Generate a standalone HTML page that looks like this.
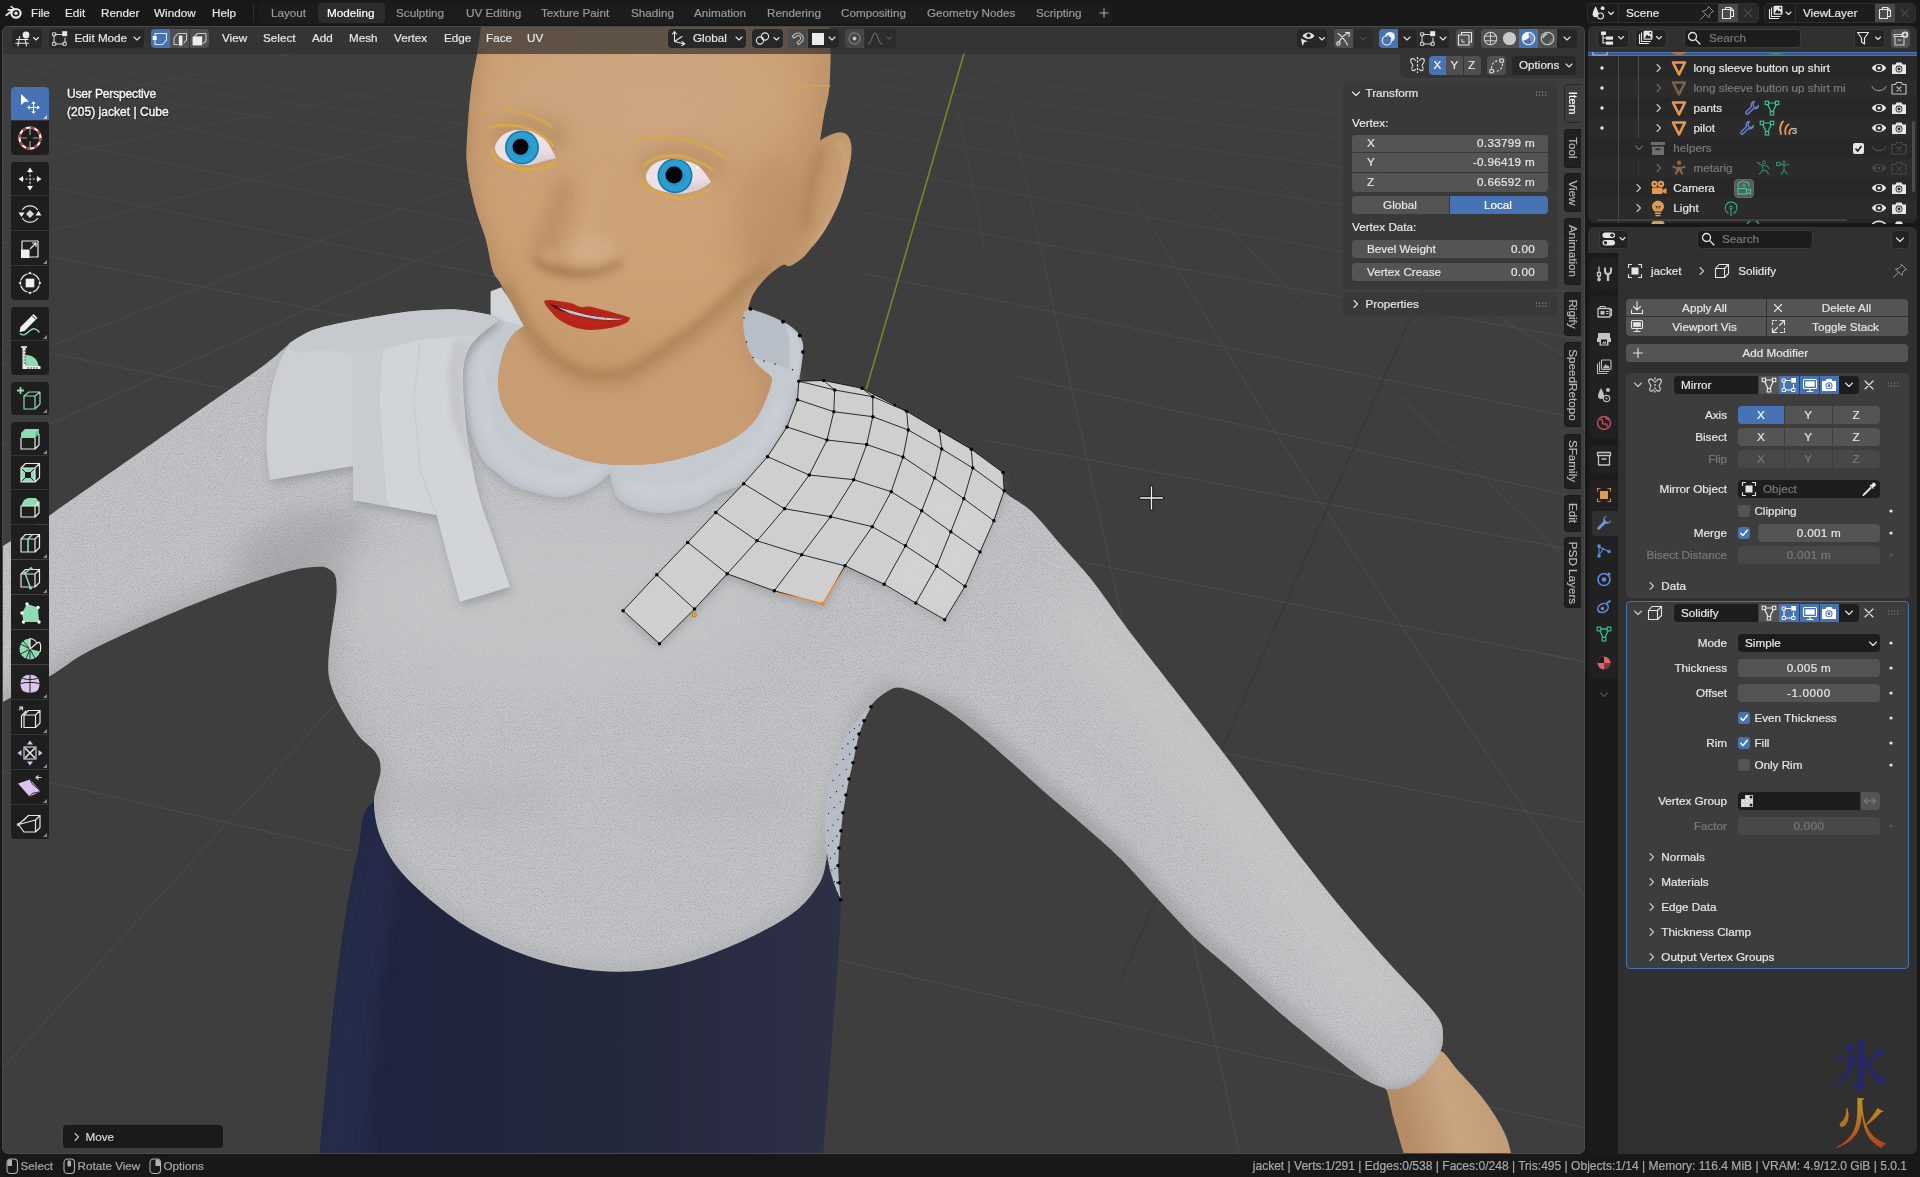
<!DOCTYPE html>
<html lang="en">
<head>
<meta charset="utf-8">
<title>Blender - jacket modeling</title>
<style>
*{box-sizing:border-box;margin:0;padding:0}
html,body{width:1920px;height:1177px;overflow:hidden;background:#181818}
body{position:relative;font-family:"Liberation Sans","Noto Sans CJK JP",sans-serif;font-size:11.7px;color:#e6e6e6;line-height:1}
.a{position:absolute}
.t{position:absolute;white-space:nowrap;line-height:14px;height:14px;margin-top:-7px;-webkit-text-stroke:.2px}
.tc{transform:translateX(-50%)}
.tr{transform:translateX(-100%)}
.n{letter-spacing:.3px}
.dim{color:#9a9a9a}
.dim2{color:#7a7a7a}
.btn{position:absolute;background:#545454;border-radius:3px}
.dk{position:absolute;background:#1d1d1d;border-radius:3px}
.bl{position:absolute;background:#4772b3;border-radius:3px}
svg{position:absolute;overflow:visible}
.ic{fill:none;stroke:#e6e6e6;stroke-width:1.1;stroke-linecap:round;stroke-linejoin:round}
</style>
</head>
<body>
<div id="root" style="position:absolute;left:0;top:0;width:1920px;height:1177px;will-change:transform">
<!-- ===== TOP BAR ===== -->
<div class="a" style="left:0;top:0;width:1920px;height:26px;background:#181818"></div>
<div class="a" style="left:258px;top:2px;width:854px;height:22px;background:#1c1c1c;border-radius:4px"></div>
<svg style="left:5px;top:4px" width="18" height="17" viewBox="0 0 18 17"><g fill="none" stroke="#e6e6e6" stroke-linecap="round" stroke-linejoin="round"><path d="M1.2 11.3 L8.4 5.8 M3.3 5.8 H8.6 M6.2 2.6 L9.4 5.1" stroke-width="1.7"/><ellipse cx="11" cy="9.3" rx="4.6" ry="4.3" stroke-width="2.2"/></g><circle cx="11" cy="9.3" r="1.7" fill="#e6e6e6"/></svg>
<span class="t" style="left:31px;top:12.6px">File</span>
<span class="t" style="left:65px;top:12.6px">Edit</span>
<span class="t" style="left:101px;top:12.6px">Render</span>
<span class="t" style="left:154px;top:12.6px">Window</span>
<span class="t" style="left:212px;top:12.6px">Help</span>
<div class="a" style="left:253px;top:4px;width:1px;height:18px;background:#2e2e2e"></div>
<span class="t dim" style="left:271px;top:12.6px">Layout</span>
<div class="a" style="left:318px;top:3px;width:67px;height:20px;background:#2c2c2c;border-radius:4px"></div>
<span class="t" style="left:327px;top:12.6px;color:#fff">Modeling</span>
<span class="t dim" style="left:396px;top:12.6px">Sculpting</span>
<span class="t dim" style="left:466px;top:12.6px">UV Editing</span>
<span class="t dim" style="left:541px;top:12.6px">Texture Paint</span>
<span class="t dim" style="left:631px;top:12.6px">Shading</span>
<span class="t dim" style="left:694px;top:12.6px">Animation</span>
<span class="t dim" style="left:767px;top:12.6px">Rendering</span>
<span class="t dim" style="left:841px;top:12.6px">Compositing</span>
<span class="t dim" style="left:927px;top:12.6px">Geometry Nodes</span>
<span class="t dim" style="left:1036px;top:12.6px">Scripting</span>
<svg style="left:1099px;top:8px" width="10" height="10"><path d="M5 0.5V9.5M0.5 5H9.5" stroke="#b0b0b0" stroke-width="1.1" fill="none"/></svg>

<!-- scene selector -->
<div class="a" style="left:1587px;top:3px;width:172px;height:20px;background:#1d1d1d;border-radius:4px;border:1px solid #2f2f2f"></div>
<div class="a" style="left:1618px;top:4px;width:1px;height:18px;background:#303030"></div>
<div class="a" style="left:1718px;top:4px;width:20px;height:18px;background:#4a4a4a"></div>
<div class="a" style="left:1738px;top:4px;width:20px;height:18px;background:#2a2a2a;border-radius:0 3px 3px 0"></div>
<svg style="left:1591px;top:5px" width="26" height="16" viewBox="0 0 26 16"><path d="M4.6 1.2 C6.5 4.5 7.6 7.6 7.6 9.6 C7.6 11.2 6.3 12.2 4.6 12.2 C2.9 12.2 1.6 11.2 1.6 9.6 C1.6 7.6 2.7 4.5 4.6 1.2Z" fill="#e6e6e6"/><circle cx="11.6" cy="3.2" r="1.9" fill="#e6e6e6"/><circle cx="9.5" cy="11" r="3" fill="#1d1d1d" stroke="#e6e6e6" stroke-width="1.1"/><path d="M17.5 7 L20 9.5 L22.5 7" class="ic"/></svg>
<span class="t" style="left:1626px;top:12.6px">Scene</span>
<svg style="left:1699px;top:5px" width="16" height="16" viewBox="0 0 16 16"><path d="M9.5 1.5 L14.5 6.5 L13 7 L10.5 9.5 L10 12.5 L3.5 6 L6.5 5.5 L9 3Z M6.7 9.3 L1.5 14.5" fill="none" stroke="#8a8a8a" stroke-width="1" stroke-linejoin="round" stroke-linecap="round"/></svg>
<svg style="left:1721px;top:6px" width="14" height="14" viewBox="0 0 14 14"><path d="M4.5 3.5V1.5H9.5L12.5 4.5V10.5H9.5 M9.5 1.5V4.5H12.5 M1.5 3.5H9.5V12.5H1.5Z" class="ic"/></svg>
<svg style="left:1743px;top:8px" width="10" height="10"><path d="M1 1L9 9M9 1L1 9" stroke="#4a4a4a" stroke-width="1.1" fill="none"/></svg>

<!-- view layer selector -->
<div class="a" style="left:1764px;top:3px;width:152px;height:20px;background:#1d1d1d;border-radius:4px;border:1px solid #2f2f2f"></div>
<div class="a" style="left:1795px;top:4px;width:1px;height:18px;background:#303030"></div>
<div class="a" style="left:1875px;top:4px;width:20px;height:18px;background:#4a4a4a"></div>
<div class="a" style="left:1895px;top:4px;width:20px;height:18px;background:#2a2a2a;border-radius:0 3px 3px 0"></div>
<svg style="left:1768px;top:5px" width="26" height="16" viewBox="0 0 26 16"><path d="M1.5 4.5V13.5H10.5 M3.5 2.8V11.5H12.3" class="ic"/><rect x="5.5" y="0.8" width="9" height="9" rx="1" fill="#e6e6e6"/><path d="M6.5 8.5 L9 4.5 L10.5 6.5 L11.5 5.5 L13.5 8.5Z" fill="#1d1d1d"/><circle cx="12.3" cy="3" r="0.9" fill="#1d1d1d"/><path d="M18 7 L20.5 9.5 L23 7" class="ic"/></svg>
<span class="t" style="left:1803px;top:12.6px">ViewLayer</span>
<svg style="left:1878px;top:6px" width="14" height="14" viewBox="0 0 14 14"><path d="M4.5 3.5V1.5H9.5L12.5 4.5V10.5H9.5 M9.5 1.5V4.5H12.5 M1.5 3.5H9.5V12.5H1.5Z" class="ic"/></svg>
<svg style="left:1900px;top:8px" width="10" height="10"><path d="M1 1L9 9M9 1L1 9" stroke="#4a4a4a" stroke-width="1.1" fill="none"/></svg>
<!-- ===== 3D VIEWPORT SCENE ===== -->
<div class="a" id="vp" style="left:2px;top:26px;width:1583px;height:1128px;border-radius:6px;overflow:hidden;background:#3e3e3e;border:1px solid #4a4a4a">
<svg style="left:-3px;top:-27px" width="1920" height="1177" viewBox="0 0 1920 1177">
<defs>
 <filter id="b1" filterUnits="userSpaceOnUse" x="-60" y="-60" width="2040" height="1300"><feGaussianBlur stdDeviation="1"/></filter>
 <filter id="b2" filterUnits="userSpaceOnUse" x="-60" y="-60" width="2040" height="1300"><feGaussianBlur stdDeviation="2"/></filter>
 <filter id="b4" filterUnits="userSpaceOnUse" x="-60" y="-60" width="2040" height="1300"><feGaussianBlur stdDeviation="4"/></filter>
 <filter id="b8" filterUnits="userSpaceOnUse" x="-60" y="-60" width="2040" height="1300"><feGaussianBlur stdDeviation="8"/></filter>
 <filter id="b14" filterUnits="userSpaceOnUse" x="-60" y="-60" width="2040" height="1300"><feGaussianBlur stdDeviation="14"/></filter>
 <filter id="b25" filterUnits="userSpaceOnUse" x="-60" y="-60" width="2040" height="1300"><feGaussianBlur stdDeviation="25"/></filter>
 <filter id="fNoise" filterUnits="userSpaceOnUse" x="0" y="280" width="1520" height="820"><feTurbulence type="fractalNoise" baseFrequency="0.85" numOctaves="2" seed="7" result="n"/><feColorMatrix in="n" type="matrix" values="3.2 0 0 0 -1.1  3.2 0 0 0 -1.1  3.2 0 0 0 -1.1  0 0 0 0 1"/></filter>
 <linearGradient id="gSkirt" x1="330" y1="0" x2="840" y2="0" gradientUnits="userSpaceOnUse"><stop offset="0" stop-color="#222a47"/><stop offset="0.12" stop-color="#1f253e"/><stop offset="0.5" stop-color="#23273c"/><stop offset="0.85" stop-color="#2a2d43"/><stop offset="1" stop-color="#2e3046"/></linearGradient>
 <linearGradient id="gArmR" x1="1030" y1="800" x2="1160" y2="660" gradientUnits="userSpaceOnUse"><stop offset="0" stop-color="#a4a6a9"/><stop offset="0.3" stop-color="#c0c1c3"/><stop offset="0.65" stop-color="#cfcfd0"/><stop offset="1" stop-color="#c6c7c9"/></linearGradient>
 <linearGradient id="gArmL" x1="150" y1="440" x2="235" y2="590" gradientUnits="userSpaceOnUse"><stop offset="0" stop-color="#c4c6c9"/><stop offset="0.5" stop-color="#bdbfc2"/><stop offset="1" stop-color="#a2a4a7"/></linearGradient>
 <linearGradient id="gBody" x1="0" y1="330" x2="0" y2="980" gradientUnits="userSpaceOnUse"><stop offset="0" stop-color="#cccdd0"/><stop offset="0.5" stop-color="#c9cacc"/><stop offset="1" stop-color="#c4c5c6"/></linearGradient>
 <radialGradient id="gHead" cx="660" cy="130" r="340" gradientUnits="userSpaceOnUse"><stop offset="0" stop-color="#d0a57b"/><stop offset="0.55" stop-color="#cb9f74"/><stop offset="1" stop-color="#b98c5f"/></radialGradient>
 <linearGradient id="gHand" x1="1400" y1="1110" x2="1495" y2="1085" gradientUnits="userSpaceOnUse"><stop offset="0" stop-color="#b58c64"/><stop offset="0.5" stop-color="#c8a580"/><stop offset="1" stop-color="#c29c76"/></linearGradient>
 <radialGradient id="gIris" cx="0.5" cy="0.5" r="0.5"><stop offset="0" stop-color="#2b9bd0"/><stop offset="0.8" stop-color="#2ca0d4"/><stop offset="1" stop-color="#1b7fae"/></radialGradient>
</defs>
<linearGradient id="gFade" x1="0" y1="40" x2="0" y2="420" gradientUnits="userSpaceOnUse"><stop offset="0" stop-color="#fff" stop-opacity=".35"/><stop offset="1" stop-color="#fff" stop-opacity="1"/></linearGradient>
<mask id="mFade" maskUnits="userSpaceOnUse" x="0" y="0" width="1920" height="1177"><rect x="0" y="0" width="1920" height="1177" fill="url(#gFade)"/></mask>
<g stroke="#4d4d4d" stroke-width="1" fill="none" mask="url(#mFade)">
<path d="M0 130.5 L480 224.4"/>
<path d="M0 177.4 L497 277"/>
<path d="M0 246 L385 324"/>
<path d="M0 93 L490 186.2"/>
<path d="M0 77.7 L470 147.7"/>
<path d="M0 67.7 L475 125.8"/>
<path d="M0 60 L478 108"/>
<path d="M0 343 L235 390.5"/>
<path d="M0 244 L470 122.6"/>
<path d="M0 166.3 L472 72.8"/>
<path d="M0 365.7 L469 183"/>
<path d="M0 445.9 L490 228.6"/>
<path d="M0 115 L300 52"/>
<path d="M0 1071 L336 703.7"/>
<path d="M0 771 L354 851.5"/>
<path d="M860 166 L1590 295.6"/>
<path d="M860 212 L1590 341"/>
<path d="M860 272.8 L1590 421"/>
<path d="M1012 375.6 L1590 500"/>
<path d="M860 131 L1590 243"/>
<path d="M860 104 L1590 200"/>
<path d="M860 84 L1590 166"/>
<path d="M860 68 L1590 138"/>
<path d="M983 440 L1590 553"/>
<path d="M1073 560 L1590 663"/>
<path d="M1223 753 L1590 824"/>
<path d="M838.5 960 L1215.6 1046.6 L1590 1129"/>
<path d="M1008.5 101.5 L1239.5 1153"/>
<path d="M1103.6 147 L1280 440 L1417 650 L1590 905.7"/>
<path d="M1179.8 181.4 L1590 582"/>
<path d="M1240 160 L1590 372"/>
<path d="M1290 150 L1590 262"/>
<path d="M950 70 L985 250"/>
<path d="M1525.6 650 L1590 663"/>
</g>
<path d="M1440 250 L1120 982" stroke="#343434" stroke-width="1" fill="none"/>
<path d="M965 50 L866 390" stroke="#6c8b2c" stroke-width="1.6" fill="none"/>
<path d="M1440.5 1051 C1445.8 1052.4 1451.2 1063 1458 1070.5 C1464.8 1078 1474.5 1087.9 1481 1096 C1487.5 1104.1 1492.7 1112 1497 1119 C1501.3 1126 1504.2 1131.5 1506.7 1138 C1509.2 1144.5 1512 1158 1512 1158 L1405 1158 C1405 1158 1396.7 1130.1 1393.7 1119 C1390.7 1107.9 1389.3 1098 1387 1091.5 C1384.7 1085 1376.2 1082.8 1380 1080 C1383.8 1077.2 1402.1 1078 1409.8 1075 C1417.5 1072 1420.9 1066 1426 1062 C1431.1 1058 1435.2 1049.6 1440.5 1051Z" fill="url(#gHand)"/>
<clipPath id="cSkirt"><path d="M374 802 C358.7 810.6 362.8 832 358 851.5 C353.2 871 348.7 896.6 345 919 C341.3 941.4 338.7 963.7 336 986 C333.3 1008.3 331.8 1024.3 329 1053 C326.2 1081.7 319 1158 319 1158 L823 1158 C823 1158 829.4 1074.2 832 1040 C834.6 1005.8 837 976.2 838.5 953 C840 929.8 841 911 840.7 901 C840.5 891 838.8 897.7 837 893 C835.2 888.3 831.8 879.2 830 873 C828.2 866.8 826 856 826 856 L700 800 L450 800 C450 800 389.3 793.4 374 802Z"/></clipPath>
<path d="M374 802 C358.7 810.6 362.8 832 358 851.5 C353.2 871 348.7 896.6 345 919 C341.3 941.4 338.7 963.7 336 986 C333.3 1008.3 331.8 1024.3 329 1053 C326.2 1081.7 319 1158 319 1158 L823 1158 C823 1158 829.4 1074.2 832 1040 C834.6 1005.8 837 976.2 838.5 953 C840 929.8 841 911 840.7 901 C840.5 891 838.8 897.7 837 893 C835.2 888.3 831.8 879.2 830 873 C828.2 866.8 826 856 826 856 L700 800 L450 800 C450 800 389.3 793.4 374 802Z" fill="url(#gSkirt)"/>
<path d="M374 802 L358 851.5 L345 919 L336 986 L329 1053 L319 1158 L365 1158 L378 1000 L400 880Z" fill="#2a3152" opacity=".45" filter="url(#b8)" clip-path="url(#cSkirt)"/>
<clipPath id="cShirt"><path d="M-5 551 C-5 551 21 535 33 527 C45 519 50.3 514.7 67 503 C83.7 491.3 116.3 468.7 133 457 C149.7 445.3 155.8 440.8 167 433 C178.2 425.2 189 417.7 200 410 C211 402.3 221.8 394.8 233 387 C244.2 379.2 257.5 370.3 267 363 C276.5 355.7 290 343 290 343 L420 320 L520 322 L745 322 L800 381 L1003 472.5 C1003 472.5 999.4 484.6 1004 491 C1008.6 497.4 1021.1 501.6 1030.6 510.6 C1040.1 519.6 1050.8 533.4 1061 545 C1071.2 556.6 1081.6 567.2 1091.8 580 C1102 592.8 1111.8 607.8 1122 621.5 C1132.2 635.2 1140.8 646.2 1153 662 C1165.2 677.8 1180 696.5 1195 716 C1210 735.5 1228.7 759.8 1243 779 C1257.3 798.2 1271 817.5 1281 831 C1291 844.5 1293 847.2 1303 860 C1313 872.8 1327.7 891.8 1340.8 907.6 C1353.9 923.4 1368 939.8 1381.6 955 C1395.2 970.2 1412.6 987.9 1422.3 998.7 C1432 1009.5 1436 1014 1439.5 1020 C1443 1026 1442.8 1029.8 1443 1035 C1443.2 1040.2 1443.3 1044.8 1440.5 1051 C1437.7 1057.2 1431.1 1066.3 1426 1072 C1420.9 1077.7 1415.2 1082.1 1409.8 1085 C1404.4 1087.9 1398.5 1089 1393.7 1089.3 C1388.9 1089.6 1386.2 1088.8 1380.8 1086.7 C1375.3 1084.7 1369.6 1082.6 1361 1077 C1352.4 1071.4 1339.7 1061.3 1329 1053 C1318.3 1044.7 1306.8 1035.2 1297 1027 C1287.2 1018.8 1280.8 1013.5 1270 1004 C1259.2 994.5 1244.5 981 1232 970 C1219.5 959 1207.3 949.8 1195 938 C1182.7 926.2 1170.5 912.3 1158 899 C1145.5 885.7 1132.7 870.5 1120 858 C1107.3 845.5 1094.8 835.2 1082 824 C1069.2 812.8 1055.5 801.5 1043.5 791 C1031.5 780.5 1020.6 770.3 1010 761 C999.4 751.7 990 743.2 980 735 C970 726.8 959.8 718.7 950 712 C940.2 705.3 929.5 698.8 921 694.7 C912.5 690.6 904.7 688 899 687.5 C893.3 687 891.3 688.9 887 691.5 C882.7 694.1 877 698.2 873 703 C869 707.8 866.3 712.7 863 720 C859.7 727.3 856.3 735.8 853 747 C849.7 758.2 846.3 773.7 843 787 C839.7 800.3 835.7 816 833 827 C830.3 838 828.2 847.2 827 853 C825.8 858.8 827.2 857 826 862 C824.8 867 824.3 875 819.5 883 C814.7 891 806.8 901.8 797 910 C787.2 918.2 774.4 925 761 932 C747.6 939 731.3 946.3 716.5 952 C701.7 957.7 686.9 962.8 672 966 C657.1 969.2 642 971 627 971.5 C612 972 597 971.1 582 969 C567 966.9 551.9 963.7 537 959 C522.1 954.3 507.4 948.5 492.6 941 C477.8 933.5 462.9 925.2 448 914 C433.1 902.8 414.2 886.7 403 874 C391.8 861.3 385.8 850 381 838 C376.2 826 374.1 813.2 374 802 C373.9 790.8 380.3 779.2 380.6 771 C380.9 762.8 379.8 759 376 753 C372.2 747 364 742.8 358 735 C352 727.2 344.5 714.3 340 706 C335.5 697.7 332.9 691.3 331 685 C329.1 678.7 328.5 675.2 328.3 668 C328.1 660.8 329.1 650.8 330 642 C330.9 633.2 332.9 623.2 334 615 C335.1 606.8 336.5 599.7 336.7 593 C336.9 586.3 336.8 579.2 335 575 C333.2 570.8 329.1 568.9 326 567.5 C322.9 566.1 321 566.5 316.7 566.7 C312.4 566.9 306.1 567.4 300 568.5 C293.9 569.6 288.3 571.1 280 573.5 C271.7 575.9 262.2 578.8 250 583 C237.8 587.2 220.9 593.5 206.7 599 C192.5 604.5 178.9 610.1 165 616 C151.1 621.9 137.2 628 123.3 634.5 C109.4 641 93.9 648.1 81.7 655 C69.5 661.9 64.5 667.5 50 676 C35.5 684.5 -5 706 -5 706 L-5 551Z"/></clipPath>
<path d="M-5 551 C-5 551 21 535 33 527 C45 519 50.3 514.7 67 503 C83.7 491.3 116.3 468.7 133 457 C149.7 445.3 155.8 440.8 167 433 C178.2 425.2 189 417.7 200 410 C211 402.3 221.8 394.8 233 387 C244.2 379.2 257.5 370.3 267 363 C276.5 355.7 290 343 290 343 L420 320 L520 322 L745 322 L800 381 L1003 472.5 C1003 472.5 999.4 484.6 1004 491 C1008.6 497.4 1021.1 501.6 1030.6 510.6 C1040.1 519.6 1050.8 533.4 1061 545 C1071.2 556.6 1081.6 567.2 1091.8 580 C1102 592.8 1111.8 607.8 1122 621.5 C1132.2 635.2 1140.8 646.2 1153 662 C1165.2 677.8 1180 696.5 1195 716 C1210 735.5 1228.7 759.8 1243 779 C1257.3 798.2 1271 817.5 1281 831 C1291 844.5 1293 847.2 1303 860 C1313 872.8 1327.7 891.8 1340.8 907.6 C1353.9 923.4 1368 939.8 1381.6 955 C1395.2 970.2 1412.6 987.9 1422.3 998.7 C1432 1009.5 1436 1014 1439.5 1020 C1443 1026 1442.8 1029.8 1443 1035 C1443.2 1040.2 1443.3 1044.8 1440.5 1051 C1437.7 1057.2 1431.1 1066.3 1426 1072 C1420.9 1077.7 1415.2 1082.1 1409.8 1085 C1404.4 1087.9 1398.5 1089 1393.7 1089.3 C1388.9 1089.6 1386.2 1088.8 1380.8 1086.7 C1375.3 1084.7 1369.6 1082.6 1361 1077 C1352.4 1071.4 1339.7 1061.3 1329 1053 C1318.3 1044.7 1306.8 1035.2 1297 1027 C1287.2 1018.8 1280.8 1013.5 1270 1004 C1259.2 994.5 1244.5 981 1232 970 C1219.5 959 1207.3 949.8 1195 938 C1182.7 926.2 1170.5 912.3 1158 899 C1145.5 885.7 1132.7 870.5 1120 858 C1107.3 845.5 1094.8 835.2 1082 824 C1069.2 812.8 1055.5 801.5 1043.5 791 C1031.5 780.5 1020.6 770.3 1010 761 C999.4 751.7 990 743.2 980 735 C970 726.8 959.8 718.7 950 712 C940.2 705.3 929.5 698.8 921 694.7 C912.5 690.6 904.7 688 899 687.5 C893.3 687 891.3 688.9 887 691.5 C882.7 694.1 877 698.2 873 703 C869 707.8 866.3 712.7 863 720 C859.7 727.3 856.3 735.8 853 747 C849.7 758.2 846.3 773.7 843 787 C839.7 800.3 835.7 816 833 827 C830.3 838 828.2 847.2 827 853 C825.8 858.8 827.2 857 826 862 C824.8 867 824.3 875 819.5 883 C814.7 891 806.8 901.8 797 910 C787.2 918.2 774.4 925 761 932 C747.6 939 731.3 946.3 716.5 952 C701.7 957.7 686.9 962.8 672 966 C657.1 969.2 642 971 627 971.5 C612 972 597 971.1 582 969 C567 966.9 551.9 963.7 537 959 C522.1 954.3 507.4 948.5 492.6 941 C477.8 933.5 462.9 925.2 448 914 C433.1 902.8 414.2 886.7 403 874 C391.8 861.3 385.8 850 381 838 C376.2 826 374.1 813.2 374 802 C373.9 790.8 380.3 779.2 380.6 771 C380.9 762.8 379.8 759 376 753 C372.2 747 364 742.8 358 735 C352 727.2 344.5 714.3 340 706 C335.5 697.7 332.9 691.3 331 685 C329.1 678.7 328.5 675.2 328.3 668 C328.1 660.8 329.1 650.8 330 642 C330.9 633.2 332.9 623.2 334 615 C335.1 606.8 336.5 599.7 336.7 593 C336.9 586.3 336.8 579.2 335 575 C333.2 570.8 329.1 568.9 326 567.5 C322.9 566.1 321 566.5 316.7 566.7 C312.4 566.9 306.1 567.4 300 568.5 C293.9 569.6 288.3 571.1 280 573.5 C271.7 575.9 262.2 578.8 250 583 C237.8 587.2 220.9 593.5 206.7 599 C192.5 604.5 178.9 610.1 165 616 C151.1 621.9 137.2 628 123.3 634.5 C109.4 641 93.9 648.1 81.7 655 C69.5 661.9 64.5 667.5 50 676 C35.5 684.5 -5 706 -5 706 L-5 551Z" fill="#c0c1c4"/>
<g clip-path="url(#cShirt)">
<path d="M1060 600 C1075 616.7 1118.3 661.7 1150 700 C1181.7 738.3 1218.3 788.3 1250 830 C1281.7 871.7 1315 918.3 1340 950 C1365 981.7 1390 1008.3 1400 1020" fill="none" stroke="#c8c8c9" stroke-width="60" opacity=".7" filter="url(#b25)"/>
<path d="M905 700 C912.5 702 937.5 706.2 950 712 C962.5 717.8 970 726.8 980 735 C990 743.2 999.4 751.7 1010 761 C1020.6 770.3 1031.5 780.5 1043.5 791 C1055.5 801.5 1069.2 812.8 1082 824 C1094.8 835.2 1107.3 845.5 1120 858 C1132.7 870.5 1145.5 885.7 1158 899 C1170.5 912.3 1182.7 926.2 1195 938 C1207.3 949.8 1219.5 959 1232 970 C1244.5 981 1259.2 994.5 1270 1004 C1280.8 1013.5 1287.2 1018.8 1297 1027 C1306.8 1035.2 1318.3 1044.7 1329 1053 C1339.7 1061.3 1352.3 1069.2 1361 1077 C1369.7 1084.8 1371.2 1097 1381 1100 C1390.8 1103 1413.5 1095.8 1420 1095" fill="none" stroke="#8e9093" stroke-width="22" opacity=".6" filter="url(#b8)"/>
<path d="M1447 1030 C1446.3 1034.3 1446.5 1048 1443 1056 C1439.5 1064 1431.8 1072.2 1426 1078 C1420.2 1083.8 1414 1088.3 1408 1091 C1402 1093.7 1393 1093.5 1390 1094" fill="none" stroke="#9c9ea1" stroke-width="10" opacity=".5" filter="url(#b4)"/>
<path d="M-10 720 C0 714.8 34.7 697.7 50 689 C65.3 680.3 69.8 675 82 668 C94.2 661 109.2 653.5 123 647 C136.8 640.5 151 634.8 165 629 C179 623.2 192.8 617.5 207 612 C221.2 606.5 237.8 600.3 250 596 C262.2 591.7 268.3 588.8 280 586 C291.7 583.2 309.2 579.2 320 579 C330.8 578.8 340.8 584 345 585" fill="none" stroke="#8e9093" stroke-width="34" opacity=".55" filter="url(#b14)"/>
<ellipse cx="300" cy="545" rx="70" ry="30" fill="#909296" opacity=".45" filter="url(#b14)" transform="rotate(-18 300 545)"/>
<path d="M325 590 C324.5 600 321.5 631.7 322 650 C322.5 668.3 323 685 328 700 C333 715 344.7 728.3 352 740 C359.3 751.7 369.7 758.3 372 770 C374.3 781.7 367 803.3 366 810" fill="none" stroke="#97999c" stroke-width="26" opacity=".5" filter="url(#b14)"/>
<path d="M905 690 C902 690.2 892.3 689.3 887 691.5 C881.7 693.7 877 698.2 873 703 C869 707.8 866.3 712.7 863 720 C859.7 727.3 856.3 735.8 853 747 C849.7 758.2 846.3 773.7 843 787 C839.7 800.3 835.7 816 833 827 C830.3 838 828.2 847.2 827 853 C825.8 858.8 826.2 857.5 826 862 C825.8 866.5 826 877 826 880" fill="none" stroke="#999b9e" stroke-width="22" opacity=".5" filter="url(#b8)"/>
<path d="M830 870 C828.2 872.2 825 876.3 819.5 883 C814 889.7 806.8 901.8 797 910 C787.2 918.2 774.4 925 761 932 C747.6 939 731.3 946.3 716.5 952 C701.7 957.7 686.9 962.8 672 966 C657.1 969.2 642 971 627 971.5 C612 972 597 971.1 582 969 C567 966.9 551.9 963.7 537 959 C522.1 954.3 507.4 948.5 492.6 941 C477.8 933.5 462.9 925.2 448 914 C433.1 902.8 414.2 886.7 403 874 C391.8 861.3 385.8 850 381 838 C376.2 826 375.8 810 374 802 C372.2 794 370.7 792 370 790" fill="none" stroke="#a0a2a4" stroke-width="14" opacity=".5" filter="url(#b8)"/>
<ellipse cx="470" cy="800" rx="90" ry="22" fill="#a8aaac" opacity=".3" filter="url(#b14)"/>
<ellipse cx="720" cy="800" rx="90" ry="22" fill="#a8aaac" opacity=".25" filter="url(#b14)"/>
<rect x="0" y="280" width="1520" height="820" filter="url(#fNoise)" opacity=".09" style="mix-blend-mode:soft-light"/>
<ellipse cx="560" cy="600" rx="220" ry="90" fill="#c6c7c9" opacity=".6" filter="url(#b25)"/>
</g>
<path d="M500 320 C495.4 323.3 496.2 322.1 492.5 325 C488.8 327.9 481.7 333.2 477.5 337.5 C473.3 341.8 469.9 345.6 467.5 351 C465.1 356.4 463.7 362.7 463 370 C462.3 377.3 462.5 385.6 463.5 395 C464.5 404.4 466 416.2 469 426.7 C472 437.2 477 450.3 481.7 458 C486.4 465.7 491.8 468.5 497 473 C502.2 477.5 507 481.8 513 485 C519 488.2 525.8 490 533 492 C540.2 494 549 496.5 556 497 C563 497.5 568.8 496.7 575 495 C581.2 493.3 588 489.8 593 487 C598 484.2 602.2 480.3 605 478 C607.8 475.7 610 473 610 473 C610 473 610.3 478 611.5 482 C612.7 486 614.4 493.2 617 497 C619.6 500.8 622.8 502.8 627 505 C631.2 507.2 636 509.2 642 510.5 C648 511.8 655.5 513.1 662.7 513 C669.9 512.9 678.6 511.3 685 510 C691.4 508.7 694.8 508 701 505 C707.2 502 714.9 495.6 722 492 C729.1 488.4 736.2 488.6 743.4 483.6 C750.6 478.6 758.1 470.6 765 462 C771.9 453.4 779.7 442.3 785 432 C790.3 421.7 794.5 408.5 797 400 C799.5 391.5 800 381 800 381 L790 340 L745 318 L520 305 C520 305 504.6 316.7 500 320Z" fill="#8f9296" opacity=".5" filter="url(#b4)" transform="translate(0,4)"/>
<path d="M500 320 C495.4 323.3 496.2 322.1 492.5 325 C488.8 327.9 481.7 333.2 477.5 337.5 C473.3 341.8 469.9 345.6 467.5 351 C465.1 356.4 463.7 362.7 463 370 C462.3 377.3 462.5 385.6 463.5 395 C464.5 404.4 466 416.2 469 426.7 C472 437.2 477 450.3 481.7 458 C486.4 465.7 491.8 468.5 497 473 C502.2 477.5 507 481.8 513 485 C519 488.2 525.8 490 533 492 C540.2 494 549 496.5 556 497 C563 497.5 568.8 496.7 575 495 C581.2 493.3 588 489.8 593 487 C598 484.2 602.2 480.3 605 478 C607.8 475.7 610 473 610 473 C610 473 610.3 478 611.5 482 C612.7 486 614.4 493.2 617 497 C619.6 500.8 622.8 502.8 627 505 C631.2 507.2 636 509.2 642 510.5 C648 511.8 655.5 513.1 662.7 513 C669.9 512.9 678.6 511.3 685 510 C691.4 508.7 694.8 508 701 505 C707.2 502 714.9 495.6 722 492 C729.1 488.4 736.2 488.6 743.4 483.6 C750.6 478.6 758.1 470.6 765 462 C771.9 453.4 779.7 442.3 785 432 C790.3 421.7 794.5 408.5 797 400 C799.5 391.5 800 381 800 381 L790 340 L745 318 L520 305 C520 305 504.6 316.7 500 320Z" fill="#c5c9d0"/>
<clipPath id="cBand"><path d="M500 320 C495.4 323.3 496.2 322.1 492.5 325 C488.8 327.9 481.7 333.2 477.5 337.5 C473.3 341.8 469.9 345.6 467.5 351 C465.1 356.4 463.7 362.7 463 370 C462.3 377.3 462.5 385.6 463.5 395 C464.5 404.4 466 416.2 469 426.7 C472 437.2 477 450.3 481.7 458 C486.4 465.7 491.8 468.5 497 473 C502.2 477.5 507 481.8 513 485 C519 488.2 525.8 490 533 492 C540.2 494 549 496.5 556 497 C563 497.5 568.8 496.7 575 495 C581.2 493.3 588 489.8 593 487 C598 484.2 602.2 480.3 605 478 C607.8 475.7 610 473 610 473 C610 473 610.3 478 611.5 482 C612.7 486 614.4 493.2 617 497 C619.6 500.8 622.8 502.8 627 505 C631.2 507.2 636 509.2 642 510.5 C648 511.8 655.5 513.1 662.7 513 C669.9 512.9 678.6 511.3 685 510 C691.4 508.7 694.8 508 701 505 C707.2 502 714.9 495.6 722 492 C729.1 488.4 736.2 488.6 743.4 483.6 C750.6 478.6 758.1 470.6 765 462 C771.9 453.4 779.7 442.3 785 432 C790.3 421.7 794.5 408.5 797 400 C799.5 391.5 800 381 800 381 L790 340 L745 318 L520 305 C520 305 504.6 316.7 500 320Z"/></clipPath>
<g clip-path="url(#cBand)">
<path d="M486 340 C485.2 346.7 480.8 365.8 481 380 C481.2 394.2 483 412.5 487 425 C491 437.5 497 446.7 505 455 C513 463.3 524.2 470.8 535 475 C545.8 479.2 559.2 480.8 570 480 C580.8 479.2 595 471.7 600 470" fill="none" stroke="#ced2d8" stroke-width="12" opacity=".6" filter="url(#b4)"/>
<path d="M625 485 C630.8 486.2 647.5 492 660 492 C672.5 492 687.5 489.5 700 485 C712.5 480.5 724.2 473.3 735 465 C745.8 456.7 757.2 445.8 765 435 C772.8 424.2 779.2 405.8 782 400" fill="none" stroke="#ced2d8" stroke-width="12" opacity=".6" filter="url(#b4)"/>
<path d="M500 320 C498.8 320.8 496.2 322.1 492.5 325 C488.8 327.9 481.7 333.2 477.5 337.5 C473.3 341.8 469.9 345.6 467.5 351 C465.1 356.4 463.7 362.7 463 370 C462.3 377.3 462.5 385.6 463.5 395 C464.5 404.4 466 416.2 469 426.7 C472 437.2 477 450.3 481.7 458 C486.4 465.7 491.8 468.5 497 473 C502.2 477.5 507 481.8 513 485 C519 488.2 525.8 490 533 492 C540.2 494 549 496.5 556 497 C563 497.5 568.8 496.7 575 495 C581.2 493.3 588 489.8 593 487 C598 484.2 602.2 480.3 605 478 C607.8 475.7 610 473 610 473 C610 473 610.3 478 611.5 482 C612.7 486 614.4 493.2 617 497 C619.6 500.8 622.8 502.8 627 505 C631.2 507.2 636 509.2 642 510.5 C648 511.8 655.5 513.1 662.7 513 C669.9 512.9 678.6 511.3 685 510 C691.4 508.7 694.8 508 701 505 C707.2 502 714.9 495.6 722 492 C729.1 488.4 736.2 488.6 743.4 483.6 C750.6 478.6 758.1 470.6 765 462 C771.9 453.4 779.7 442.3 785 432 C790.3 421.7 795 405.3 797 400" fill="none" stroke="#adb1b8" stroke-width="4" opacity=".5" filter="url(#b2)"/>
</g>
<clipPath id="cHead"><path d="M482 20 C482 20 479.3 40.3 477.5 52 C475.7 63.7 472.8 75.3 471 90 C469.2 104.7 467.7 127.5 467 140 C466.3 152.5 466.3 156.7 467 165 C467.7 173.3 469.2 181.7 471 190 C472.8 198.3 475 206.7 477.5 215 C480 223.3 483.5 230.8 486 240 C488.5 249.2 490.2 262.9 492.5 270 C494.8 277.1 497.1 277.3 500 282.5 C502.9 287.7 506.9 295.2 510 301 C513.1 306.8 516.5 313.3 518.8 317.5 C521 321.7 523.8 326 523.8 326 C523.8 326 515.6 331.4 512.5 335 C509.4 338.6 507.1 342.5 505 347.5 C502.9 352.5 501.2 358.9 500 365 C498.8 371.1 497.8 377.8 498 384 C498.2 390.2 499.5 397 501 402 C502.5 407 504.3 409.9 507 414 C509.7 418.1 511.5 421.9 517 426.7 C522.5 431.5 532 438.5 540 443 C548 447.5 555.7 450.4 565 453.8 C574.3 457.1 585.6 461.1 596 463 C606.4 464.9 617 465 627.5 465 C638 465 648.3 464.5 658.8 463 C669.2 461.5 679.6 458.8 690 455.8 C700.4 452.8 712.3 448.8 721 445 C729.7 441.2 736 437.5 742 433 C748 428.5 752.9 423.2 756.7 418 C760.5 412.8 762.6 407.2 765 401.7 C767.4 396.2 770 389.2 771 385 C772 380.8 772.7 379.5 771 376.7 C769.3 373.9 764.1 371.1 761 368 C757.9 364.9 754.7 362.2 752.5 358 C750.3 353.8 749.1 347.9 748 343 C746.9 338.1 746.2 333.9 746 328.8 C745.8 323.6 746.7 315.1 747 312 C747.3 308.9 748 310 748 310 C748 310 749.7 300.6 752.5 295.4 C755.3 290.2 760.6 283.5 765 278.8 C769.4 274 775.7 269.4 779 267 C782.3 264.6 785 264.5 785 264.5 C785 264.5 787.5 266.8 790 266 C792.5 265.2 797.1 262.2 800 260 C802.9 257.8 803.3 257.5 807.5 252.5 C811.7 247.5 819.6 238.8 825 230 C830.4 221.2 836.2 209.7 840 200 C843.8 190.3 846.1 180 848 172 C849.9 164 851.2 157.3 851.5 152 C851.8 146.7 851.1 143.1 850 140 C848.9 136.9 847.3 134.7 845 133.5 C842.7 132.3 839.2 132.4 836 133 C832.8 133.6 828.7 135.7 826 137 C823.3 138.3 820 141 820 141 C820 141 822.5 123.5 824 115 C825.5 106.5 827.9 100.5 829 90 C830.1 79.5 830.5 63.7 830.5 52 C830.5 40.3 829 20 829 20 L482 20Z"/></clipPath>
<path d="M482 20 C482 20 479.3 40.3 477.5 52 C475.7 63.7 472.8 75.3 471 90 C469.2 104.7 467.7 127.5 467 140 C466.3 152.5 466.3 156.7 467 165 C467.7 173.3 469.2 181.7 471 190 C472.8 198.3 475 206.7 477.5 215 C480 223.3 483.5 230.8 486 240 C488.5 249.2 490.2 262.9 492.5 270 C494.8 277.1 497.1 277.3 500 282.5 C502.9 287.7 506.9 295.2 510 301 C513.1 306.8 516.5 313.3 518.8 317.5 C521 321.7 523.8 326 523.8 326 C523.8 326 515.6 331.4 512.5 335 C509.4 338.6 507.1 342.5 505 347.5 C502.9 352.5 501.2 358.9 500 365 C498.8 371.1 497.8 377.8 498 384 C498.2 390.2 499.5 397 501 402 C502.5 407 504.3 409.9 507 414 C509.7 418.1 511.5 421.9 517 426.7 C522.5 431.5 532 438.5 540 443 C548 447.5 555.7 450.4 565 453.8 C574.3 457.1 585.6 461.1 596 463 C606.4 464.9 617 465 627.5 465 C638 465 648.3 464.5 658.8 463 C669.2 461.5 679.6 458.8 690 455.8 C700.4 452.8 712.3 448.8 721 445 C729.7 441.2 736 437.5 742 433 C748 428.5 752.9 423.2 756.7 418 C760.5 412.8 762.6 407.2 765 401.7 C767.4 396.2 770 389.2 771 385 C772 380.8 772.7 379.5 771 376.7 C769.3 373.9 764.1 371.1 761 368 C757.9 364.9 754.7 362.2 752.5 358 C750.3 353.8 749.1 347.9 748 343 C746.9 338.1 746.2 333.9 746 328.8 C745.8 323.6 746.7 315.1 747 312 C747.3 308.9 748 310 748 310 C748 310 749.7 300.6 752.5 295.4 C755.3 290.2 760.6 283.5 765 278.8 C769.4 274 775.7 269.4 779 267 C782.3 264.6 785 264.5 785 264.5 C785 264.5 787.5 266.8 790 266 C792.5 265.2 797.1 262.2 800 260 C802.9 257.8 803.3 257.5 807.5 252.5 C811.7 247.5 819.6 238.8 825 230 C830.4 221.2 836.2 209.7 840 200 C843.8 190.3 846.1 180 848 172 C849.9 164 851.2 157.3 851.5 152 C851.8 146.7 851.1 143.1 850 140 C848.9 136.9 847.3 134.7 845 133.5 C842.7 132.3 839.2 132.4 836 133 C832.8 133.6 828.7 135.7 826 137 C823.3 138.3 820 141 820 141 C820 141 822.5 123.5 824 115 C825.5 106.5 827.9 100.5 829 90 C830.1 79.5 830.5 63.7 830.5 52 C830.5 40.3 829 20 829 20 L482 20Z" fill="url(#gHead)"/>
<g clip-path="url(#cHead)">
<path d="M523 327 C517.8 323.7 515.5 331.6 512.5 335 C509.5 338.4 507.1 342.5 505 347.5 C502.9 352.5 501.2 358.9 500 365 C498.8 371.1 497.8 377.8 498 384 C498.2 390.2 499.5 397 501 402 C502.5 407 504.3 409.9 507 414 C509.7 418.1 511.5 421.9 517 426.7 C522.5 431.5 532 438.5 540 443 C548 447.5 555.7 450.4 565 453.8 C574.3 457.1 585.6 461.1 596 463 C606.4 464.9 617 465 627.5 465 C638 465 648.3 464.5 658.8 463 C669.2 461.5 679.6 458.8 690 455.8 C700.4 452.8 712.3 448.8 721 445 C729.7 441.2 736 437.5 742 433 C748 428.5 752.9 423.2 756.7 418 C760.5 412.8 762.6 407.2 765 401.7 C767.4 396.2 770 389.2 771 385 C772 380.8 772.7 379.5 771 376.7 C769.3 373.9 764.1 371.1 761 368 C757.9 364.9 754.7 362.2 752.5 358 C750.3 353.8 749.1 347.9 748 343 C746.9 338.1 746.2 333.9 746 328.8 C745.8 323.6 746.7 315.1 747 312 C747.3 308.9 749.2 312 748 310 C746.8 308 746.2 298 740 300 C733.8 302 719.3 315.7 711 322 C702.7 328.3 697 332.8 690 338 C683 343.2 676 348.2 669 353 C662 357.8 654.9 362.9 648 367 C641.1 371.1 634.4 375.2 627.5 377.5 C620.6 379.8 613.6 380.7 606.7 381 C599.8 381.3 593 381.2 586 379.5 C579 377.8 572 375.1 565 371 C558 366.9 551 362.3 544 355 C537 347.7 528.2 330.3 523 327Z" fill="#c99d73"/>
<path d="M505 290 C508 296.1 516.5 316.1 523 326.7 C529.5 337.3 537 346.5 544 353.8 C551 361 558 365.8 565 370 C572 374.2 579 377.1 586 378.8 C593 380.4 599.8 380.3 606.7 380 C613.6 379.7 620.6 379 627.5 376.7 C634.4 374.4 641.1 370.2 648 366 C654.9 361.8 662 356.5 669 351.7 C676 346.9 683 342.3 690 337 C697 331.7 704 325.9 711 320 C718 314.1 725.9 307.2 731.7 301.7 C737.5 296.2 739.6 292.3 746 287 C752.4 281.7 766 272.8 770 270" fill="none" stroke="#a98055" stroke-width="12" opacity=".75" filter="url(#b4)" transform="translate(0,-5)"/>
<path d="M505 290 C508 296.1 516.5 316.1 523 326.7 C529.5 337.3 537 346.5 544 353.8 C551 361 558 365.8 565 370 C572 374.2 579 377.1 586 378.8 C593 380.4 599.8 380.3 606.7 380 C613.6 379.7 620.6 379 627.5 376.7 C634.4 374.4 641.1 370.2 648 366 C654.9 361.8 662 356.5 669 351.7 C676 346.9 683 342.3 690 337 C697 331.7 704 325.9 711 320 C718 314.1 725.9 307.2 731.7 301.7 C737.5 296.2 739.6 292.3 746 287 C752.4 281.7 766 272.8 770 270" fill="none" stroke="#b48c62" stroke-width="10" opacity=".5" filter="url(#b4)" transform="translate(0,5)"/>
<path d="M474 40 C472.7 50 468 80 466 100 C464 120 461.3 140.8 462 160 C462.7 179.2 466 198 470 215 C474 232 479.7 246.2 486 262 C492.3 277.8 504.3 302 508 310" fill="none" stroke="#b0875d" stroke-width="22" opacity=".6" filter="url(#b8)"/>
<path d="M835 30 C834.2 41.7 833.3 78.3 830 100 C826.7 121.7 821.7 138.3 815 160 C808.3 181.7 799.2 210.8 790 230 C780.8 249.2 765 267.5 760 275" fill="none" stroke="#b48b61" stroke-width="40" opacity=".55" filter="url(#b14)"/>
<ellipse cx="770" cy="215" rx="36" ry="60" fill="#b58c62" opacity=".5" filter="url(#b14)"/>
<ellipse cx="640" cy="95" rx="150" ry="55" fill="#cba783" opacity=".55" filter="url(#b25)"/>
<path d="M600 170 C598.7 177.5 594.7 202.5 592 215 C589.3 227.5 585.3 240 584 245" fill="none" stroke="#d0ab85" stroke-width="14" opacity=".6" filter="url(#b8)"/>
<path d="M562 175 C565.8 174.2 574.3 181.7 575 190 C575.7 198.3 569.2 215 566 225 C562.8 235 560.3 243.8 556 250 C551.7 256.2 544 261.7 540 262 C536 262.3 532 258.2 532 252 C532 245.8 536.7 234.5 540 225 C543.3 215.5 548.3 203.3 552 195 C555.7 186.7 558.2 175.8 562 175Z" fill="#a98056" opacity=".45" filter="url(#b8)"/>
<path d="M534 257 C535.5 256.5 540.7 260.5 545 262 C549.3 263.5 554.2 265 560 266 C565.8 267 573.3 268 580 268 C586.7 268 593.7 267.3 600 266 C606.3 264.7 614.3 260.3 618 260 C621.7 259.7 623.7 262 622 264 C620.3 266 613.7 269.8 608 272 C602.3 274.2 595 276.2 588 277 C581 277.8 572.7 277.8 566 277 C559.3 276.2 553 274 548 272 C543 270 538.3 267.5 536 265 C533.7 262.5 532.5 257.5 534 257Z" fill="#9c7349" opacity=".8" filter="url(#b4)"/>
<ellipse cx="592" cy="250" rx="24" ry="15" fill="#d5b18c" opacity=".75" filter="url(#b8)"/>
<ellipse cx="549" cy="255" rx="8" ry="7" fill="#c9a37c" opacity=".6" filter="url(#b4)"/>
<ellipse cx="530" cy="136" rx="40" ry="20" fill="#b0865b" opacity=".5" filter="url(#b8)"/>
<ellipse cx="682" cy="165" rx="46" ry="22" fill="#b0865b" opacity=".45" filter="url(#b8)"/>
<path d="M822 150 C820.7 154.2 816.3 165.8 814 175 C811.7 184.2 809.3 196.2 808 205 C806.7 213.8 806.3 224.2 806 228" fill="none" stroke="#a67d53" stroke-width="7" opacity=".7" filter="url(#b4)"/>
<path d="M838 142 C839.3 144.7 845.3 150 846 158 C846.7 166 844.7 180 842 190 C839.3 200 835 209 830 218 C825 227 815 239.7 812 244" fill="none" stroke="#caa681" stroke-width="6" opacity=".7" filter="url(#b2)"/>
<path d="M748 310 C747.8 315 745.3 330.8 747 340 C748.7 349.2 753.8 357.5 758 365 C762.2 372.5 771.3 376.7 772 385 C772.7 393.3 763.7 410 762 415" fill="none" stroke="#b1885e" stroke-width="14" opacity=".5" filter="url(#b8)"/>
</g>
<clipPath id="cEye495"><path d="M495 148.5 C494.8 144.3 498.9 138.1 503 135 C507.1 131.9 513 129.8 519.5 130 C526 130.2 535.9 131.3 542 136 C548.1 140.7 556 158 556 158 C556 158 549.1 159.8 544 161 C538.9 162.2 532.2 165.2 525.5 165 C518.8 164.8 509.1 162.8 504 160 C498.9 157.2 495.2 152.7 495 148.5Z"/></clipPath>
<path d="M495 148.5 C494.8 144.3 498.9 138.1 503 135 C507.1 131.9 513 129.8 519.5 130 C526 130.2 535.9 131.3 542 136 C548.1 140.7 556 158 556 158 C556 158 549.1 159.8 544 161 C538.9 162.2 532.2 165.2 525.5 165 C518.8 164.8 509.1 162.8 504 160 C498.9 157.2 495.2 152.7 495 148.5Z" fill="#ebe1e7"/>
<g clip-path="url(#cEye495)">
<ellipse cx="548" cy="163" rx="22" ry="8" fill="#c9b5b8" opacity=".5" filter="url(#b4)"/>
<circle cx="522" cy="147.5" r="17" fill="#1a78a6"/>
<circle cx="522" cy="147.5" r="15.4" fill="#2a9ed2"/>
<circle cx="522" cy="147.5" r="10" fill="#258fc2" opacity=".6"/>
<circle cx="520.5" cy="146.8" r="8" fill="#050505"/>
</g>
<clipPath id="cEye646"><path d="M646 177.2 C645.8 173.2 649.6 167 654 164 C658.4 161 665.3 158.8 672.5 159 C679.7 159.2 690.6 161.2 697 165 C703.4 168.8 711 182 711 182 C711 182 704.4 187.6 699 189.5 C693.6 191.4 685.8 193.7 678.5 193.5 C671.2 193.3 660.4 191.2 655 188.5 C649.6 185.8 646.2 181.3 646 177.2Z"/></clipPath>
<path d="M646 177.2 C645.8 173.2 649.6 167 654 164 C658.4 161 665.3 158.8 672.5 159 C679.7 159.2 690.6 161.2 697 165 C703.4 168.8 711 182 711 182 C711 182 704.4 187.6 699 189.5 C693.6 191.4 685.8 193.7 678.5 193.5 C671.2 193.3 660.4 191.2 655 188.5 C649.6 185.8 646.2 181.3 646 177.2Z" fill="#ebe1e7"/>
<g clip-path="url(#cEye646)">
<ellipse cx="703" cy="191.5" rx="22" ry="8" fill="#c9b5b8" opacity=".5" filter="url(#b4)"/>
<circle cx="675" cy="175.8" r="17.5" fill="#1a78a6"/>
<circle cx="675" cy="175.8" r="15.9" fill="#2a9ed2"/>
<circle cx="675" cy="175.8" r="10.5" fill="#258fc2" opacity=".6"/>
<circle cx="674" cy="175" r="8.5" fill="#050505"/>
</g>
<circle cx="697.5" cy="167.5" r="1.3" fill="#fff"/>
<g fill="none" stroke="#d6a94d" stroke-linecap="round" opacity=".95">
<path d="M489.7 127.6 C490.9 127.3 494.4 126 497 125.6 C499.6 125.2 502.2 125 505 125 C507.8 125 510.9 125.3 514 125.6 C517.1 125.9 520.3 126.2 523.5 127 C526.7 127.8 530.1 129.2 533 130.5 C535.9 131.8 538.6 133.4 541 135 C543.4 136.6 545.5 138.2 547.5 140 C549.5 141.8 552.1 144.6 553 145.5" stroke-width="3"/>
<path d="M491 149.5 C491.5 150.6 492.8 154.2 494 156 C495.2 157.8 496.2 159.1 498 160.5 C499.8 161.9 502.2 163.3 504.5 164.5 C506.8 165.7 509.2 166.7 512 167.5 C514.8 168.3 517.9 169 521 169.3 C524.1 169.7 527.3 169.8 530.5 169.6 C533.7 169.4 537 169 540 168.4 C543 167.8 546.2 166.9 548.8 166 C551.4 165.1 554.6 163.5 555.8 163" stroke-width="3.2"/>
<path d="M503.8 109.8 C505 110 508.5 110.5 511 111 C513.5 111.5 516.2 112 519 112.7 C521.8 113.4 525.2 114.1 528 115 C530.8 115.9 533.5 117 536 118 C538.5 119 540.9 119.9 543 121 C545.1 122.1 547.3 123.3 548.8 124.5 C550.3 125.7 551.5 127.4 552 128" stroke-width="2.6" stroke-dasharray="9 2.5" opacity=".9"/>
<path d="M480 113.5 L486 111.5" stroke-width="1.6" opacity=".6"/>
<path d="M643.7 166 C644.4 165.3 646.5 163.2 648 162 C649.5 160.8 650.5 159.9 652.8 159 C655.1 158.1 658.5 157.2 662 156.6 C665.5 156 670.2 155.5 674 155.6 C677.8 155.7 681.5 156.2 685 157 C688.5 157.8 691.8 159.2 695 160.5 C698.2 161.8 701.2 163.1 704 164.5 C706.8 165.9 710.7 168.2 712 169" stroke-width="3"/>
<path d="M641.6 181 C642.3 181.8 644.4 184.5 646 186 C647.6 187.5 649.2 188.7 651.4 190 C653.6 191.3 656.4 192.5 659 193.6 C661.6 194.7 664.3 195.6 667 196.3 C669.7 197 672.2 197.4 675 197.8 C677.8 198.2 681 198.6 683.8 198.5 C686.6 198.4 689.2 197.9 692 197.2 C694.8 196.5 697.9 195.5 700.7 194.2 C703.5 192.9 707.6 190.1 709 189.3" stroke-width="3.2"/>
<path d="M633 140.8 C634.5 140.4 638.7 139.2 642 138.6 C645.3 138 648.6 137.5 652.8 137.3 C657 137.1 662.3 137.1 667 137.3 C671.7 137.5 676.8 138 681 138.7 C685.2 139.4 688.5 140.2 692 141.3 C695.5 142.4 699 143.7 702 145 C705 146.3 707.4 147.6 710 149 C712.6 150.4 715.2 152.1 717.5 153.4 C719.8 154.7 721.9 155.7 724 156.8 C726.1 157.9 729 159.3 730 159.8" stroke-width="2.6" stroke-dasharray="12 2.5" opacity=".9"/>
<path d="M792 87 L812 85.5 L830 86" stroke-width="1.3" opacity=".7"/>
<path d="M790 64 L808 60 L825 57.5" stroke-width="1" opacity=".4"/>
</g>
<path d="M544 301 C544 301 546.4 300 548.8 300 C551.1 300 554.9 300.6 558 301 C561.1 301.4 564.9 302 567.5 302.5 C570.1 303 572.1 303.3 573.8 303.9 C575.4 304.5 576 305.4 577.5 306 C579 306.6 581 307.1 583 307.2 C585 307.3 586.8 306.3 589.4 306.6 C592 306.9 595.1 307.9 598.8 308.8 C602.4 309.6 607.1 310.8 611.2 311.9 C615.4 313 620.6 314.6 623.8 315.6 C626.9 316.6 630.3 318 630.3 318 C630.3 318 629 321.1 626.9 322.5 C624.8 323.9 621.1 325.2 617.5 326.2 C613.9 327.3 609.2 328.1 605 328.8 C600.8 329.4 596.7 330 592.5 330 C588.3 330 584.2 329.7 580 328.8 C575.8 327.8 571.2 326.1 567.5 324.4 C563.8 322.7 560.8 320.9 558 318.8 C555.2 316.6 552.7 313.5 550.6 311.2 C548.5 309 546.7 306.7 545.6 305 C544.5 303.3 544 301 544 301Z" fill="#b5251a"/>
<path d="M556 313 C555.3 313.3 563.7 317.8 568 319.5 C572.3 321.2 577 322.6 582 323.5 C587 324.4 593 325 598 325 C603 325 608 324.2 612 323.5 C616 322.8 622.7 320.7 622 320.5 C621.3 320.3 613.3 322.3 608 322.5 C602.7 322.7 596 322.3 590 321.5 C584 320.7 577.7 318.9 572 317.5 C566.3 316.1 556.7 312.7 556 313Z" fill="#c02a1c" opacity=".7" filter="url(#b1)"/>
<path d="M549 303.5 C549 303.5 554 305.1 557.5 306.2 C561 307.3 565.4 308.9 570 310.2 C574.6 311.5 580 312.9 585 314 C590 315.1 595 316.1 600 316.8 C605 317.5 610.6 317.9 615 318.2 C619.4 318.5 626.5 318.6 626.5 318.6 C626.5 318.6 619.4 320 615 320.2 C610.6 320.4 605 320.3 600 319.8 C595 319.3 590 318.4 585 317.4 C580 316.4 574.7 315 570 313.6 C565.3 312.2 560.5 310.7 557 309 C553.5 307.3 549 303.5 549 303.5Z" fill="#4a1512"/>
<path d="M557.5 307 C557.5 307 565.4 309.4 570 310.6 C574.6 311.8 580 313.3 585 314.4 C590 315.5 595 316.3 600 317 C605 317.7 610.8 318.1 615 318.4 C619.2 318.7 625 318.8 625 318.8 C625 318.8 619.2 319.9 615 320 C610.8 320.1 605 320 600 319.5 C595 319 590 318.1 585 317 C580 315.9 574.6 314.9 570 313.2 C565.4 311.5 557.5 307 557.5 307Z" fill="#c9c9d2"/>
<path d="M566 310.5 V313 M574 313 V315.5 M582 315 V317.5 M590 316.5 V319 M598 317.5 V320 M606 318.2 V320.5 M614 318.8 V320.5" stroke="#6a6a76" stroke-width="0.7" fill="none"/>
<path d="M490.6 291.3 L501.5 287.3 L511 302 L519 318 L523.8 326 L500 320 L490.6 315Z" fill="#d2d5d9"/>
<path d="M290 343 C290 343 303.6 333.6 313 330 C322.4 326.4 332.2 324.6 346.7 321.7 C361.2 318.8 386.1 314.6 400 312.7 C413.9 310.8 420 310.5 430 310 C440 309.5 449.9 308.9 460 309.8 C470.1 310.6 490.6 315 490.6 315 L500 320 C500 320 496.2 322.1 492.5 325 C488.8 327.9 481.7 333.2 477.5 337.5 C473.3 341.8 469.9 345.6 467.5 351 C465.1 356.4 463.7 362.7 463 370 C462.3 377.3 462.9 384.5 463.5 395 C464.1 405.5 465.3 421.3 466.7 433 C468.1 444.7 469.8 453.8 472 465 C474.2 476.2 476.2 487 480 500 C483.8 513 490 528.5 495 543 C500 557.5 510 586.7 510 586.7 L460 601.7 C460 601.7 451.9 572.5 448 558 C444.1 543.5 436.7 515 436.7 515 L353 500 L353 466 L270 480 C270 480 267.6 463.8 267 456 C266.4 448.2 266.4 441.5 266.7 433 C267 424.5 267.9 413.3 269 405 C270.1 396.7 271.2 390.2 273 383 C274.8 375.8 277.2 368.7 280 362 C282.8 355.3 290 343 290 343Z" fill="#808286" opacity=".5" filter="url(#b4)" transform="translate(2,5)"/>
<path d="M290 343 C290 343 303.6 333.6 313 330 C322.4 326.4 332.2 324.6 346.7 321.7 C361.2 318.8 386.1 314.6 400 312.7 C413.9 310.8 420 310.5 430 310 C440 309.5 449.9 308.9 460 309.8 C470.1 310.6 490.6 315 490.6 315 L500 320 C500 320 496.2 322.1 492.5 325 C488.8 327.9 481.7 333.2 477.5 337.5 C473.3 341.8 469.9 345.6 467.5 351 C465.1 356.4 463.7 362.7 463 370 C462.3 377.3 462.9 384.5 463.5 395 C464.1 405.5 465.3 421.3 466.7 433 C468.1 444.7 469.8 453.8 472 465 C474.2 476.2 476.2 487 480 500 C483.8 513 490 528.5 495 543 C500 557.5 510 586.7 510 586.7 L460 601.7 C460 601.7 451.9 572.5 448 558 C444.1 543.5 436.7 515 436.7 515 L353 500 L353 466 L270 480 C270 480 267.6 463.8 267 456 C266.4 448.2 266.4 441.5 266.7 433 C267 424.5 267.9 413.3 269 405 C270.1 396.7 271.2 390.2 273 383 C274.8 375.8 277.2 368.7 280 362 C282.8 355.3 290 343 290 343Z" fill="#cccfd3"/>
<clipPath id="cLap"><path d="M290 343 C290 343 303.6 333.6 313 330 C322.4 326.4 332.2 324.6 346.7 321.7 C361.2 318.8 386.1 314.6 400 312.7 C413.9 310.8 420 310.5 430 310 C440 309.5 449.9 308.9 460 309.8 C470.1 310.6 490.6 315 490.6 315 L500 320 C500 320 496.2 322.1 492.5 325 C488.8 327.9 481.7 333.2 477.5 337.5 C473.3 341.8 469.9 345.6 467.5 351 C465.1 356.4 463.7 362.7 463 370 C462.3 377.3 462.9 384.5 463.5 395 C464.1 405.5 465.3 421.3 466.7 433 C468.1 444.7 469.8 453.8 472 465 C474.2 476.2 476.2 487 480 500 C483.8 513 490 528.5 495 543 C500 557.5 510 586.7 510 586.7 L460 601.7 C460 601.7 451.9 572.5 448 558 C444.1 543.5 436.7 515 436.7 515 L353 500 L353 466 L270 480 C270 480 267.6 463.8 267 456 C266.4 448.2 266.4 441.5 266.7 433 C267 424.5 267.9 413.3 269 405 C270.1 396.7 271.2 390.2 273 383 C274.8 375.8 277.2 368.7 280 362 C282.8 355.3 290 343 290 343Z"/></clipPath>
<g clip-path="url(#cLap)">
<path d="M285 340 C285 340 302.7 333.1 313 330 C323.3 326.9 332.2 324.6 346.7 321.7 C361.2 318.8 386.1 314.6 400 312.7 C413.9 310.8 420 310.5 430 310 C440 309.5 449.7 309.1 460 309.8 C470.3 310.4 492 314 492 314 L500 322 C500 322 487.5 331.7 480 334 C472.5 336.3 465 335 455 336 C445 337 431.7 338 420 340 C408.3 342 396.2 345.8 385 348 C373.8 350.2 363.8 352.7 353 353 C342.2 353.3 329.7 350.2 320 350 C310.3 349.8 300.8 353.7 295 352 C289.2 350.3 285 340 285 340Z" fill="#c6c9ce"/>
<path d="M353 353 L383 350 L380 400 L383 450 L386.7 500 L392 508 L353 500Z" fill="#c8cbd0"/>
<path d="M383 350 L420 340 L455 337 L470 345 L463 370 L463.5 395 L466.7 433 L480 500 L510 586.7 L460 601.7 L436.7 515 L392 508 L386.7 500 L380 400Z" fill="#d1d4d8"/>
<path d="M420 342 L414 400 L420 470 L436.7 515" fill="none" stroke="#c6c9ce" stroke-width="1.5" opacity=".8"/>
<path d="M455 337 L470 345 L463 370 L463.5 395 L466.7 433 L472 465 L452 420 L448 370Z" fill="#bcbfc4" opacity=".6" filter="url(#b2)"/>
</g>
<path d="M750.5 309 C750.5 309 761.6 312.4 767 314.5 C772.4 316.6 778.7 319.4 783 321.7 C787.3 323.9 790.2 325.7 793 328 C795.8 330.3 798 332.8 799.7 335.5 C801.4 338.2 802.5 341.2 803 344 C803.5 346.8 803.2 348.3 803 352 C802.8 355.7 802.2 361.2 801.5 366 C800.8 370.8 798.8 381 798.8 381 L793 370 C793 370 781.7 366.1 775 364 C768.3 361.9 753 357.5 753 357.5 C753 357.5 749 351.3 747.5 346.7 C746 342.1 744.3 335.6 743.7 330 C743.1 324.4 742.9 316.5 744 313 C745.1 309.5 750.5 309 750.5 309Z" fill="#b8bec8"/>
<path d="M785 324 L797 334 L801 350 L798 378 L790 368 L790 340Z" fill="#cbd0d8" opacity=".85" filter="url(#b1)"/>
<path d="M798.8 381.2 L823.7 380.5 L862 388.3 L894.7 405 L906.7 411.3 L939.5 430.8 L971.3 449.2 L1003 472.5 L1004.2 490.8 L993.8 520.8 L980 552 L965 586.3 L944.7 619.7 L915.8 603 L884.2 584.2 L845 565.8 L822.8 603.7 L774.2 590.8 L727.2 573.8 L694.5 609 L659.5 643.7 L623.1 610.7 L656.8 574.7 L687.7 542.4 L715.8 512.5 L743.7 483.7 L767.5 456.7 L787 427 L797.5 399.7Z" fill="#808285" opacity=".45" filter="url(#b4)" transform="translate(0,5)"/>
<path d="M798.8 381.2 L823.7 380.5 L862 388.3 L894.7 405 L906.7 411.3 L939.5 430.8 L971.3 449.2 L1003 472.5 L1004.2 490.8 L993.8 520.8 L980 552 L965 586.3 L944.7 619.7 L915.8 603 L884.2 584.2 L845 565.8 L822.8 603.7 L774.2 590.8 L727.2 573.8 L694.5 609 L659.5 643.7 L623.1 610.7 L656.8 574.7 L687.7 542.4 L715.8 512.5 L743.7 483.7 L767.5 456.7 L787 427 L797.5 399.7Z" fill="#cfcfd0"/>
<path d="M934.5 478 L993.8 520.8 L944.7 619.7 L884.2 584.2Z" fill="#d4d4d5" opacity=".6" filter="url(#b8)"/>
<g fill="none" stroke="#0c0c0c" stroke-width="0.85" stroke-linejoin="round">
<path d="M798.8 381.2 L823.7 380.5 L862 388.3 L894.7 405 L906.7 411.3"/>
<path d="M798.8 381.2 L834.7 390 L872.8 396.7 L906.7 411.3 L939.5 430.8 L971.3 449.2 L1003 472.5"/>
<path d="M797.5 399.7 L833.8 411.7 L872.8 416.7 L908.3 430 L941.7 449 L972.8 468 L1004.2 490.8"/>
<path d="M787 427 L827 440 L866.7 444.5 L903 457 L934.5 478 L963.8 498.7 L993.8 520.8"/>
<path d="M767.5 456.7 L809.2 475 L853.7 479.7 L891.2 491.7 L921.7 510.8 L950.8 531.7 L980 552"/>
<path d="M743.7 483.7 L784.5 508.7 L830.5 516.7 L872.2 526.7 L905.5 545.8 L936.7 566.3 L965 586.3"/>
<path d="M715.8 512.5 L757 540.8 L801.7 554.7 L845 565.8 L884.2 584.2 L915.8 603 L944.7 619.7"/>
<path d="M687.7 542.4 L727.2 573.8 L774.2 590.8"/>
<path d="M656.8 574.7 L694.5 609"/>
<path d="M623.1 610.7 L659.5 643.7"/>
<path d="M798.8 381.2 L797.5 399.7 L787 427 L767.5 456.7 L743.7 483.7 L715.8 512.5 L687.7 542.4 L656.8 574.7 L623.1 610.7"/>
<path d="M834.7 390 L833.8 411.7 L827 440 L809.2 475 L784.5 508.7 L757 540.8 L727.2 573.8 L694.5 609 L659.5 643.7"/>
<path d="M872.8 396.7 L872.8 416.7 L866.7 444.5 L853.7 479.7 L830.5 516.7 L801.7 554.7 L774.2 590.8"/>
<path d="M906.7 411.3 L908.3 430 L903 457 L891.2 491.7 L872.2 526.7 L845 565.8"/>
<path d="M939.5 430.8 L941.7 449 L934.5 478 L921.7 510.8 L905.5 545.8 L884.2 584.2"/>
<path d="M971.3 449.2 L972.8 468 L963.8 498.7 L950.8 531.7 L936.7 566.3 L915.8 603"/>
<path d="M1003 472.5 L1004.2 490.8 L993.8 520.8 L980 552 L965 586.3 L944.7 619.7"/>
<path d="M823.7 380.5 L834.7 390"/>
<path d="M862 388.3 L872.8 396.7"/>
</g>
<path d="M774.2 590.8 L822.8 603.7 L845 565.8" fill="none" stroke="#f08a1e" stroke-width="1"/>
<linearGradient id="gSel" x1="774" y1="591" x2="823" y2="604" gradientUnits="userSpaceOnUse"><stop offset="0" stop-color="#111"/><stop offset="0.5" stop-color="#f08a1e"/></linearGradient>
<path d="M774.2 590.8 L822.8 603.7" fill="none" stroke="url(#gSel)" stroke-width="1"/>
<linearGradient id="gSel2" x1="845" y1="566" x2="823" y2="604" gradientUnits="userSpaceOnUse"><stop offset="0" stop-color="#111"/><stop offset="0.5" stop-color="#f08a1e"/></linearGradient>
<path d="M845 565.8 L822.8 603.7" fill="none" stroke="url(#gSel2)" stroke-width="1"/>
<g fill="#000">
<circle cx="623.1" cy="610.7" r="1.75"/>
<circle cx="656.8" cy="574.7" r="1.75"/>
<circle cx="659.5" cy="643.7" r="1.75"/>
<circle cx="687.7" cy="542.4" r="1.75"/>
<circle cx="694.5" cy="609" r="1.75"/>
<circle cx="715.8" cy="512.5" r="1.75"/>
<circle cx="727.2" cy="573.8" r="1.75"/>
<circle cx="743.7" cy="483.7" r="1.75"/>
<circle cx="757" cy="540.8" r="1.75"/>
<circle cx="767.5" cy="456.7" r="1.75"/>
<circle cx="774.2" cy="590.8" r="1.75"/>
<circle cx="784.5" cy="508.7" r="1.75"/>
<circle cx="787" cy="427" r="1.75"/>
<circle cx="797.5" cy="399.7" r="1.75"/>
<circle cx="798.8" cy="381.2" r="1.75"/>
<circle cx="801.7" cy="554.7" r="1.75"/>
<circle cx="809.2" cy="475" r="1.75"/>
<circle cx="823.7" cy="380.5" r="1.75"/>
<circle cx="827" cy="440" r="1.75"/>
<circle cx="830.5" cy="516.7" r="1.75"/>
<circle cx="833.8" cy="411.7" r="1.75"/>
<circle cx="834.7" cy="390" r="1.75"/>
<circle cx="845" cy="565.8" r="1.75"/>
<circle cx="853.7" cy="479.7" r="1.75"/>
<circle cx="862" cy="388.3" r="1.75"/>
<circle cx="866.7" cy="444.5" r="1.75"/>
<circle cx="872.2" cy="526.7" r="1.75"/>
<circle cx="872.8" cy="396.7" r="1.75"/>
<circle cx="872.8" cy="416.7" r="1.75"/>
<circle cx="884.2" cy="584.2" r="1.75"/>
<circle cx="891.2" cy="491.7" r="1.75"/>
<circle cx="894.7" cy="405" r="1.2"/>
<circle cx="903" cy="457" r="1.75"/>
<circle cx="905.5" cy="545.8" r="1.75"/>
<circle cx="906.7" cy="411.3" r="1.75"/>
<circle cx="908.3" cy="430" r="1.75"/>
<circle cx="915.8" cy="603" r="1.75"/>
<circle cx="921.7" cy="510.8" r="1.75"/>
<circle cx="934.5" cy="478" r="1.75"/>
<circle cx="936.7" cy="566.3" r="1.75"/>
<circle cx="939.5" cy="430.8" r="1.75"/>
<circle cx="941.7" cy="449" r="1.75"/>
<circle cx="944.7" cy="619.7" r="1.75"/>
<circle cx="950.8" cy="531.7" r="1.75"/>
<circle cx="963.8" cy="498.7" r="1.75"/>
<circle cx="965" cy="586.3" r="1.75"/>
<circle cx="971.3" cy="449.2" r="1.75"/>
<circle cx="972.8" cy="468" r="1.75"/>
<circle cx="980" cy="552" r="1.75"/>
<circle cx="993.8" cy="520.8" r="1.75"/>
<circle cx="1003" cy="472.5" r="1.75"/>
<circle cx="1004.2" cy="490.8" r="1.75"/>
<circle cx="750.5" cy="308.8" r="1.9"/>
<circle cx="783" cy="321.7" r="1.9"/>
<circle cx="799.7" cy="335.5" r="1.9"/>
<circle cx="803" cy="352" r="1.9"/>
<circle cx="753" cy="357.5" r="0.7"/>
<circle cx="764" cy="361" r="0.7"/>
<circle cx="775" cy="364" r="0.7"/>
<circle cx="792.5" cy="369.7" r="0.7"/>
<circle cx="746.5" cy="342" r="0.7"/>
<circle cx="744" cy="318" r="0.7"/>
</g>
<circle cx="822.8" cy="603.7" r="2" fill="#f08a1e"/>
<circle cx="694.2" cy="614.8" r="2.2" fill="#f3a04a" stroke="#b86a14" stroke-width="0.8"/>
<path d="M871 706.7 L864 720.7 L859 734 L856 748 L853 762.7 L849 779 L846 795 L843 812.7 L841 830.7 L839 848 L838 865.7 L839 882.7 L840.7 899.7 L836.5 890 L833 880 L830 870 L828 860 L826 847 L825 833 L825 816 L826.7 800 L829 783 L833 766.7 L839 750 L846.7 733 L856 721 L866.7 710Z" fill="#b7bcc6"/>
<g fill="#000">
<circle cx="871" cy="706.7" r="1.8"/>
<circle cx="864" cy="720.7" r="1.8"/>
<circle cx="859" cy="734" r="1.8"/>
<circle cx="856" cy="748" r="1.8"/>
<circle cx="853" cy="762.7" r="1.8"/>
<circle cx="849" cy="779" r="1.8"/>
<circle cx="846" cy="795" r="1.8"/>
<circle cx="843" cy="812.7" r="1.8"/>
<circle cx="841" cy="830.7" r="1.8"/>
<circle cx="839" cy="848" r="1.8"/>
<circle cx="838" cy="865.7" r="1.8"/>
<circle cx="839" cy="882.7" r="1.8"/>
<circle cx="840.7" cy="899.7" r="1.8"/>
<circle cx="859.2" cy="725.1" r="0.6"/>
<circle cx="854.4" cy="728.5" r="0.6"/>
<circle cx="849.6" cy="732" r="0.6"/>
<circle cx="853.4" cy="739.4" r="0.6"/>
<circle cx="847.9" cy="743.9" r="0.6"/>
<circle cx="842.3" cy="748.3" r="0.6"/>
<circle cx="849.6" cy="754.2" r="0.6"/>
<circle cx="843.2" cy="759.4" r="0.6"/>
<circle cx="836.8" cy="764.6" r="0.6"/>
<circle cx="846.3" cy="769.3" r="0.6"/>
<circle cx="839.7" cy="775" r="0.6"/>
<circle cx="833" cy="780.6" r="0.6"/>
<circle cx="842.8" cy="785.8" r="0.6"/>
<circle cx="836.6" cy="791.7" r="0.6"/>
<circle cx="830.4" cy="797.5" r="0.6"/>
<circle cx="840.2" cy="801.8" r="0.6"/>
<circle cx="834.3" cy="807.7" r="0.6"/>
<circle cx="828.5" cy="813.5" r="0.6"/>
<circle cx="838" cy="819.3" r="0.6"/>
<circle cx="833" cy="825" r="0.6"/>
<circle cx="828" cy="830.6" r="0.6"/>
<circle cx="836.8" cy="836.2" r="0.6"/>
<circle cx="832.7" cy="840.8" r="0.6"/>
<circle cx="828.5" cy="845.3" r="0.6"/>
<circle cx="834.8" cy="853.6" r="0.6"/>
<circle cx="830.5" cy="858.2" r="0.6"/>
<circle cx="834.9" cy="868.4" r="0.6"/>
<circle cx="831.8" cy="870" r="0.6"/>
<circle cx="836.7" cy="882.7" r="0.6"/>
<circle cx="834.4" cy="881.6" r="0.6"/>
<circle cx="839.1" cy="897" r="0.6"/>
<circle cx="837.5" cy="893.2" r="0.6"/>
</g>
<path d="M1151.5 487 V509 M1140.5 498 H1162.5" stroke="#1a1a1a" stroke-width="3.4" fill="none" stroke-linecap="round"/>
<path d="M1151.5 487 V509 M1140.5 498 H1162.5" stroke="#f2f2f2" stroke-width="1.3" fill="none" stroke-linecap="round"/>
</svg>
</div>
<!-- ===== VIEWPORT HEADER ===== -->
<div class="a" style="left:3px;top:27px;width:1581px;height:27px;background:rgba(48,48,48,.7);border-radius:5px 5px 0 0"></div>
<div class="a" style="left:1400px;top:54px;width:184px;height:24px;background:rgba(48,48,48,.7);border-radius:0 0 0 6px"></div>
<!-- editor type -->
<div class="a" style="left:12px;top:29px;width:30px;height:19px;background:#272727;border-radius:4px"></div>
<svg style="left:15px;top:30px" width="26" height="17" viewBox="0 0 26 17"><g class="ic" stroke-width="1"><path d="M1.5 9.5H13 M0.8 13.2H13.6 M4.6 6.5L3 16 M10.2 9.5L11.5 16"/></g><circle cx="11" cy="5" r="3.4" fill="#e6e6e6"/><path d="M18.5 7.5L21 10L23.5 7.5" class="ic"/></svg>
<!-- mode -->
<div class="a" style="left:49px;top:29px;width:95px;height:19px;background:#272727;border-radius:4px"></div>
<svg style="left:52px;top:30px" width="16" height="17" viewBox="0 0 16 17"><path d="M3 4.5H10 M2 5.5V12.5 M3.5 14H11.5 M13 12.5V8" class="ic" style="stroke:#cfcfcf"/><rect x="0.8" y="2.8" width="3" height="3" class="ic" style="stroke-width:0.9"/><rect x="0.8" y="12.3" width="3" height="3" class="ic" style="stroke-width:0.9"/><rect x="11.3" y="12.3" width="3" height="3" class="ic" style="stroke-width:0.9"/><rect x="10.2" y="1.2" width="5" height="5" fill="#e6e6e6"/></svg>
<span class="t" style="left:74.5px;top:38px">Edit Mode</span>
<svg style="left:132px;top:35px" width="10" height="8"><path d="M2 2L5 5L8 2" class="ic"/></svg>
<!-- select modes -->
<div class="a" style="left:150.5px;top:29px;width:19px;height:19px;background:#4772b3;border-radius:4px 0 0 4px"></div>
<div class="a" style="left:170px;top:29px;width:19px;height:19px;background:#4f4f4f"></div>
<div class="a" style="left:189.5px;top:29px;width:19.5px;height:19px;background:#4f4f4f;border-radius:0 4px 4px 0"></div>
<svg style="left:152px;top:31px" width="16" height="15" viewBox="0 0 16 15"><path d="M3 2.5H14.5V9L10.5 13.5H3V9.5 M3 5V2.5" class="ic" style="stroke:#dfe8f6"/><rect x="0.7" y="5" width="4" height="4" fill="#fff"/></svg>
<svg style="left:171.5px;top:31px" width="16" height="15" viewBox="0 0 16 15"><path d="M5.5 13.5H2V7L6 2.5H14.5V9L12 11.8" class="ic" style="stroke:#c8c8c8"/><rect x="6.8" y="4.6" width="3.6" height="10" fill="#ededed"/></svg>
<svg style="left:191px;top:31px" width="16" height="15" viewBox="0 0 16 15"><path d="M4 5L6.5 2.5H15V10L12.5 12.3" class="ic" style="stroke:#c8c8c8"/><rect x="1.6" y="5.4" width="9.6" height="9" fill="#ededed"/></svg>
<!-- menus -->
<span class="t" style="left:222px;top:38px">View</span>
<span class="t" style="left:263px;top:38px">Select</span>
<span class="t" style="left:312px;top:38px">Add</span>
<span class="t" style="left:349px;top:38px">Mesh</span>
<span class="t" style="left:394px;top:38px">Vertex</span>
<span class="t" style="left:444px;top:38px">Edge</span>
<span class="t" style="left:486px;top:38px">Face</span>
<span class="t" style="left:527px;top:38px">UV</span>
<!-- transform orientation -->
<div class="a" style="left:667.5px;top:29px;width:78px;height:19px;background:#272727;border-radius:4px"></div>
<svg style="left:671px;top:30px" width="17" height="17" viewBox="0 0 17 17"><path d="M3.5 1.5V11.5L13.5 14 M3.5 11.5L11 6.5 M1.5 4L3.5 1.5L5.5 4 M11 11.6L13.8 14L10.6 15.6" class="ic"/></svg>
<span class="t" style="left:693px;top:38px">Global</span>
<svg style="left:733.5px;top:35px" width="10" height="8"><path d="M2 2L5 5L8 2" class="ic"/></svg>
<!-- pivot -->
<div class="a" style="left:752px;top:29px;width:30.5px;height:19px;background:#272727;border-radius:4px"></div>
<svg style="left:755px;top:30px" width="27" height="17" viewBox="0 0 27 17"><circle cx="5" cy="10.5" r="3.6" class="ic"/><circle cx="10" cy="6.5" r="3.6" class="ic"/><circle cx="7.5" cy="8.5" r="1" fill="#e6e6e6"/><path d="M19 7.5L21.5 10L24 7.5" class="ic"/></svg>
<!-- snapping -->
<div class="a" style="left:788px;top:29px;width:19px;height:19px;background:#4a4a4a;border-radius:4px 0 0 4px"></div>
<div class="a" style="left:807.5px;top:29px;width:31.5px;height:19px;background:#272727;border-radius:0 4px 4px 0"></div>
<svg style="left:790px;top:31px" width="15" height="15" viewBox="0 0 15 15"><path d="M2.2 5.2L5.6 2.6A5.4 5.4 0 0 1 12.2 10.6L8.6 13.6L6.9 11.6L10.2 8.8A2.7 2.7 0 0 0 7.2 4.7L3.9 7.2Z" fill="none" stroke="#bdbdbd" stroke-width="1.1" stroke-linejoin="round"/></svg>
<div class="a" style="left:812px;top:32.5px;width:12px;height:12px;background:#ececec"></div>
<svg style="left:826.5px;top:35px" width="10" height="8"><path d="M2 2L5 5L8 2" class="ic"/></svg>
<!-- proportional -->
<div class="a" style="left:845px;top:29px;width:19px;height:19px;background:#474747;border-radius:4px 0 0 4px"></div>
<div class="a" style="left:864.5px;top:29px;width:31.5px;height:19px;background:#2c2c2c;border-radius:0 4px 4px 0"></div>
<svg style="left:847px;top:31px" width="15" height="15" viewBox="0 0 15 15"><circle cx="7.5" cy="7.5" r="5.6" class="ic" style="stroke:#808080"/><circle cx="7.5" cy="7.5" r="1.9" fill="#c4c4c4"/></svg>
<svg style="left:867px;top:31px" width="28" height="15" viewBox="0 0 28 15"><path d="M1 13C5 13 5 2 8 2C11 2 11 13 15 13" class="ic" style="stroke:#6a6a6a"/><path d="M20 6L22.2 8.2L24.4 6" class="ic" style="stroke:#565656"/></svg>

<!-- right side: visibility -->
<div class="a" style="left:1297px;top:29px;width:30px;height:19px;background:#272727;border-radius:4px"></div>
<svg style="left:1298px;top:30px" width="30" height="17" viewBox="0 0 30 17"><path d="M3 8.5L4.5 16L6.5 12L10 11.5Z" fill="#e6e6e6"/><path d="M4.5 6C7.5 1.2 13.5 1.2 16.5 6C13.5 10 8.5 10 4.5 6Z" fill="#e6e6e6"/><circle cx="10.5" cy="5.5" r="2.1" fill="#272727"/><path d="M21.5 7.5L24 10L26.5 7.5" class="ic"/></svg>
<!-- gizmo -->
<div class="a" style="left:1334px;top:29px;width:19px;height:19px;background:#4f4f4f;border-radius:4px 0 0 4px"></div>
<div class="a" style="left:1353.5px;top:29px;width:19px;height:19px;background:#2c2c2c;border-radius:0 4px 4px 0"></div>
<svg style="left:1335px;top:30px" width="17" height="17" viewBox="0 0 17 17"><path d="M3.8 13C6 7 9 5 14.5 2.5 M14.5 2.5H10.5 M14.5 2.5L14 6.5 M3 3.5C7 6 9.5 9 12.5 15" class="ic" style="stroke:#dcdcdc"/><circle cx="3.4" cy="13.6" r="1.7" class="ic" style="stroke:#dcdcdc"/></svg>
<svg style="left:1358px;top:35px" width="10" height="8"><path d="M2 2L5 5L8 2" class="ic" style="stroke:#4c4c4c"/></svg>
<!-- overlays -->
<div class="a" style="left:1379px;top:29px;width:18.5px;height:19px;background:#4772b3;border-radius:4px 0 0 4px"></div>
<div class="a" style="left:1397.5px;top:29px;width:19.5px;height:19px;background:#272727"></div>
<svg style="left:1380px;top:30px" width="17" height="17" viewBox="0 0 17 17"><circle cx="10" cy="6.8" r="4.9" fill="#eef3fb"/><circle cx="6.8" cy="10.4" r="4.6" fill="#4772b3" stroke="#eef3fb" stroke-width="1.2"/><path d="M7.5 5.5L11 9" stroke="#4772b3" stroke-width="1.6"/></svg>
<svg style="left:1402px;top:35px" width="10" height="8"><path d="M2 2L5 5L8 2" class="ic"/></svg>
<!-- mesh edit overlays -->
<div class="a" style="left:1417.5px;top:29px;width:31.5px;height:19px;background:#272727;border-radius:0 4px 4px 0"></div>
<div class="a" style="left:1417px;top:30px;width:1px;height:17px;background:#3a3a3a"></div>
<svg style="left:1420px;top:30px" width="16" height="17" viewBox="0 0 16 17"><path d="M3 4.5H10 M2 5.5V12.5 M3.5 14H11.5 M13 12.5V8" class="ic" style="stroke:#cfcfcf"/><rect x="0.8" y="2.8" width="3" height="3" class="ic" style="stroke-width:0.9"/><rect x="0.8" y="12.3" width="3" height="3" class="ic" style="stroke-width:0.9"/><rect x="11.3" y="12.3" width="3" height="3" class="ic" style="stroke-width:0.9"/><rect x="10.2" y="1.2" width="5" height="5" fill="#e6e6e6"/></svg>
<svg style="left:1438px;top:35px" width="10" height="8"><path d="M2 2L5 5L8 2" class="ic"/></svg>
<!-- xray -->
<div class="a" style="left:1455.5px;top:29px;width:18.5px;height:19px;background:#4f4f4f;border-radius:4px"></div>
<svg style="left:1457px;top:31px" width="16" height="15" viewBox="0 0 16 15"><path d="M4.5 3.5V1.5H14.5V11H12.5" class="ic"/><rect x="1.5" y="4" width="10.5" height="10" class="ic"/><path d="M5 8.5V11H7.5" class="ic" style="stroke-width:1"/></svg>
<!-- shading -->
<div class="a" style="left:1481px;top:29px;width:18.5px;height:19px;background:#4f4f4f;border-radius:4px 0 0 4px"></div>
<div class="a" style="left:1500px;top:29px;width:18.5px;height:19px;background:#4f4f4f"></div>
<div class="a" style="left:1519px;top:29px;width:18.5px;height:19px;background:#4772b3"></div>
<div class="a" style="left:1538px;top:29px;width:18.5px;height:19px;background:#4f4f4f"></div>
<div class="a" style="left:1557px;top:29px;width:19.5px;height:19px;background:#272727;border-radius:0 4px 4px 0"></div>
<svg style="left:1482.5px;top:31px" width="15" height="15" viewBox="0 0 15 15"><circle cx="7.5" cy="7.5" r="6.3" class="ic" style="stroke:#cfcfcf"/><path d="M7.5 1.2V13.8 M1.6 5.2H13.4 M1.6 9.8H13.4" class="ic" style="stroke:#cfcfcf;stroke-width:1"/></svg>

<svg style="left:1501.5px;top:31px" width="15" height="15" viewBox="0 0 15 15"><circle cx="7.5" cy="7.5" r="6.6" fill="#c9c9c9"/></svg>
<svg style="left:1520.5px;top:31px" width="15" height="15" viewBox="0 0 15 15"><circle cx="7.5" cy="7.5" r="6.3" fill="none" stroke="#f2f6fc" stroke-width="1.1"/><path d="M7.5 1.2A6.3 6.3 0 0 0 1.6 9.5C4 9.8 7 8 8 6.5Z" fill="#f2f6fc"/><path d="M7.5 1.2A6.3 6.3 0 0 1 13.6 9L10 12.6C9.8 9 9 7.5 8 6.5Z" fill="#f2f6fc" opacity=".25"/></svg>
<svg style="left:1539.5px;top:31px" width="15" height="15" viewBox="0 0 15 15"><circle cx="7.5" cy="7.5" r="6.3" class="ic" style="stroke:#cfcfcf"/><path d="M3.2 6.5A4.6 4.6 0 0 1 7 3" class="ic" style="stroke:#cfcfcf;stroke-width:1.3"/><path d="M9 13L12.8 9.5 M6.8 13.4L13.4 7.3" stroke="#8a8a8a" stroke-width="0.8"/></svg>
<svg style="left:1561.5px;top:35px" width="10" height="8"><path d="M2 2L5 5L8 2" class="ic"/></svg>

<!-- tool settings row -->
<svg style="left:1409px;top:56px" width="17" height="18" viewBox="0 0 17 18"><path d="M6.5 4.5C4.5 1 0.8 2.5 2 6C3 8.5 5 8.5 3.5 10.5C1.5 13 3.5 16.5 6.5 13.5" class="ic" style="stroke:#d9d9d9"/><path d="M10.5 4.5C12.5 1 16.2 2.5 15 6C14 8.5 12 8.5 13.5 10.5C15.5 13 13.5 16.5 10.5 13.5" class="ic" style="stroke:#d9d9d9"/><path d="M8.5 1V17" stroke="#f2f2f2" stroke-width="1.2" stroke-dasharray="2.2 1.4"/></svg>
<div class="a" style="left:1429px;top:56px;width:16.5px;height:19px;background:#4772b3;border-radius:4px 0 0 4px"></div>
<div class="a" style="left:1446px;top:56px;width:17px;height:19px;background:#4f4f4f"></div>
<div class="a" style="left:1463.5px;top:56px;width:17px;height:19px;background:#4f4f4f;border-radius:0 4px 4px 0"></div>
<span class="t tc" style="left:1437.3px;top:65px;color:#fff">X</span>
<span class="t tc" style="left:1454.5px;top:65px">Y</span>
<span class="t tc" style="left:1471.5px;top:65px">Z</span>
<div class="a" style="left:1487px;top:56px;width:18.5px;height:19px;background:#4f4f4f;border-radius:4px"></div>
<svg style="left:1488.5px;top:57.5px" width="16" height="16" viewBox="0 0 16 16"><path d="M2.5 10.5C2.5 5.5 5.5 2.8 10.5 2.5 M13.5 5.5C13.5 10.5 10.5 13.2 5.5 13.5" class="ic" style="stroke-dasharray:2.2 1.9;stroke-linecap:butt"/><rect x="11.2" y="1" width="3.2" height="3.2" class="ic" style="stroke-width:1"/><rect x="1.2" y="11.6" width="3.2" height="3.2" class="ic" style="stroke-width:1"/></svg>
<div class="a" style="left:1512px;top:56px;width:64px;height:19px;background:#272727;border-radius:4px"></div>
<span class="t" style="left:1519px;top:65px">Options</span>
<svg style="left:1564px;top:62px" width="10" height="8"><path d="M2 2L5 5L8 2" class="ic"/></svg>
<!-- ===== VIEWPORT OVERLAY UI ===== -->
<span class="t" style="left:67px;top:94px;font-size:12px;color:#f4f4f4;text-shadow:0 0 2px #000,0 1px 1px #000;letter-spacing:-0.15px;-webkit-text-stroke:.45px">User Perspective</span>
<span class="t" style="left:67px;top:112px;font-size:12px;color:#f4f4f4;text-shadow:0 0 2px #000,0 1px 1px #000;letter-spacing:0.03px;-webkit-text-stroke:.45px">(205) jacket | Cube</span>
<div class="a" style="left:11px;top:87px;width:38px;height:68px;background:rgba(52,52,52,.9);border-radius:4px"></div>
<div class="a" style="left:11px;top:87px;width:38px;height:33px;background:#4772b3;border-radius:4px 4px 0 0"></div>
<svg style="left:16px;top:90px" width="28" height="28" viewBox="0 0 28 28"><path d="M5 4L5 15L8.5 12L13 11.5Z" fill="#fff"/><path d="M17.5 12V23 M12 17.5H23 M15.8 13.7L17.5 12L19.2 13.7 M15.8 21.3L17.5 23L19.2 21.3 M13.7 15.8L12 17.5L13.7 19.2 M21.3 15.8L23 17.5L21.3 19.2" fill="none" stroke="#fff" stroke-width="1.1"/></svg>
<svg style="left:43px;top:115px" width="4" height="4"><path d="M4 0V4H0Z" fill="#b9cdea"/></svg>
<div class="a" style="left:11px;top:121px;width:38px;height:34px;background:rgba(29,29,29,.93);border-radius:0 0 4px 4px"></div>
<svg style="left:16px;top:124px" width="28" height="28" viewBox="0 0 28 28"><circle cx="14" cy="14" r="10.5" fill="none" stroke="#f0f0f0" stroke-width="2.2"/><circle cx="14" cy="14" r="10.5" fill="none" stroke="#c43030" stroke-width="2.2" stroke-dasharray="4.1 4.15"/><path d="M14 4V11 M14 17V24 M4 14H11 M17 14H24" stroke="#9a9a9a" stroke-width="1.2"/></svg>
<div class="a" style="left:11px;top:162px;width:38px;height:138px;background:rgba(52,52,52,.9);border-radius:4px"></div>
<div class="a" style="left:11px;top:162px;width:38px;height:33px;background:rgba(29,29,29,.93);border-radius:4px 4px 0 0"></div>
<svg style="left:16px;top:165px" width="28" height="28" viewBox="0 0 28 28"><path d="M14 6V22 M6 14H22" stroke="#e8e8e8" stroke-width="1.2" stroke-dasharray="2 1.6"/><path d="M14 2.5L17 7H11Z M14 25.5L17 21H11Z M2.5 14L7 11V17Z M25.5 14L21 11V17Z" fill="#f0f0f0"/></svg>
<div class="a" style="left:11px;top:196px;width:38px;height:34px;background:rgba(29,29,29,.93);border-radius:0 0 0 0"></div>
<svg style="left:16px;top:199.5px" width="28" height="28" viewBox="0 0 28 28"><path d="M6.5 9.5A9.5 9.5 0 0 1 21.5 9.5 M21.5 18.5A9.5 9.5 0 0 1 6.5 18.5" fill="none" stroke="#e8e8e8" stroke-width="1.2" stroke-linejoin="round" stroke-linecap="round"/><path d="M2.5 12.5L8.5 12.5L5.5 17Z M19.5 15.5L25.5 15.5L22.5 11Z" fill="#f0f0f0"/><path d="M14 10L18 14L14 18L10 14Z" fill="#d8d8d8"/></svg>
<div class="a" style="left:11px;top:231px;width:38px;height:34px;background:rgba(29,29,29,.93);border-radius:0 0 0 0"></div>
<svg style="left:16px;top:234.5px" width="28" height="28" viewBox="0 0 28 28"><rect x="6" y="6" width="16" height="16" fill="none" stroke="#e8e8e8" stroke-width="1.2" stroke-linejoin="round" stroke-linecap="round"/><rect x="5" y="14.5" width="8.5" height="8.5" fill="#f0f0f0"/><path d="M14.5 13.5L20 8 M16.5 8H20V11.5" fill="none" stroke="#e8e8e8" stroke-width="1.2" stroke-linejoin="round" stroke-linecap="round"/></svg>
<svg style="left:43px;top:260px" width="4" height="4"><path d="M4 0V4H0Z" fill="#8a8a8a"/></svg>
<div class="a" style="left:11px;top:266px;width:38px;height:34px;background:rgba(29,29,29,.93);border-radius:0 0 4px 4px"></div>
<svg style="left:16px;top:269px" width="28" height="28" viewBox="0 0 28 28"><circle cx="14" cy="14" r="9.5" fill="none" stroke="#e8e8e8" stroke-width="1.2" stroke-linejoin="round" stroke-linecap="round"/><rect x="9.7" y="9.7" width="8.6" height="8.6" fill="#f0f0f0"/><path d="M14 1.8L16.6 5.5H11.4Z M14 26.2L16.6 22.5H11.4Z M1.8 14L5.5 11.4V16.6Z M26.2 14L22.5 11.4V16.6Z" fill="#f0f0f0" stroke="#1d1d1d" stroke-width="0.8"/></svg>
<div class="a" style="left:11px;top:307px;width:38px;height:68px;background:rgba(52,52,52,.9);border-radius:4px"></div>
<div class="a" style="left:11px;top:307px;width:38px;height:33px;background:rgba(29,29,29,.93);border-radius:4px 4px 0 0"></div>
<svg style="left:16px;top:310px" width="28" height="28" viewBox="0 0 28 28"><path d="M4.5 17L17.5 4L21.5 8L8.5 21L3.5 22Z" fill="#f0f0f0"/><path d="M16 5.5L20 9.5" stroke="#1d1d1d" stroke-width="1"/><path d="M4 23.5C8 27 11 23 14 20.5C17 18 20.5 18 23.5 22.5" fill="none" stroke="#8edcb2" stroke-width="1.4"/></svg>
<svg style="left:43px;top:335px" width="4" height="4"><path d="M4 0V4H0Z" fill="#8a8a8a"/></svg>
<div class="a" style="left:11px;top:341px;width:38px;height:34px;background:rgba(29,29,29,.93);border-radius:0 0 4px 4px"></div>
<svg style="left:16px;top:344px" width="28" height="28" viewBox="0 0 28 28"><path d="M9.5 11A12 12 0 0 1 22.5 23.5H9.5Z" fill="#8edcb2"/><path d="M6.5 3.5H9.5V22H24.5V25H6.5Z" fill="#f0f0f0"/><path d="M5 3H11" stroke="#f0f0f0" stroke-width="1.6"/><path d="M7.5 7H9.5 M7.5 10H9.5 M7.5 13H9.5 M7.5 16H9.5 M7.5 19H9.5 M12 23V25 M15 23V25 M18 23V25 M21 23V25" stroke="#1d1d1d" stroke-width="0.8"/></svg>
<div class="a" style="left:11px;top:382px;width:38px;height:33px;background:rgba(52,52,52,.9);border-radius:4px"></div>
<div class="a" style="left:11px;top:382px;width:38px;height:33px;background:rgba(29,29,29,.93);border-radius:4px 4px 4px 4px"></div>
<svg style="left:16px;top:384.5px" width="28" height="28" viewBox="0 0 28 28"><path d="M8 11L13 7H24V19L19 24H8Z M8 11H19V24 M19 11L24 7" fill="none" stroke="#8edcb2" stroke-width="1.2" stroke-linejoin="round"/><path d="M4.5 2V9 M1 5.5H8" stroke="#8edcb2" stroke-width="1.8"/></svg>
<svg style="left:43px;top:409px" width="4" height="4"><path d="M4 0V4H0Z" fill="#8a8a8a"/></svg>
<div class="a" style="left:11px;top:422px;width:38px;height:417px;background:rgba(52,52,52,.9);border-radius:4px"></div>
<div class="a" style="left:11px;top:422px;width:38px;height:33px;background:rgba(29,29,29,.93);border-radius:4px 4px 0 0"></div>
<svg style="left:16px;top:425px" width="28" height="28" viewBox="0 0 28 28"><path d="M5 8L9 4H23V9H19L5 13Z" fill="#8edcb2"/><path d="M5 8H19V13H5Z" fill="#8edcb2"/><path d="M19 8L23 4V9L19 13Z" fill="#6fc39a"/><path d="M5 13V24H19V13 M19 24L23 20V9" fill="none" stroke="#e8e8e8" stroke-width="1.2" stroke-linejoin="round" stroke-linecap="round"/></svg>
<svg style="left:43px;top:450px" width="4" height="4"><path d="M4 0V4H0Z" fill="#8a8a8a"/></svg>
<div class="a" style="left:11px;top:456px;width:38px;height:33px;background:rgba(29,29,29,.93);border-radius:0 0 0 0"></div>
<svg style="left:16px;top:459px" width="28" height="28" viewBox="0 0 28 28"><path d="M5 9H19V23H5Z" fill="#8edcb2"/><rect x="9" y="13" width="6" height="6" fill="#1d1d1d"/><path d="M5 9L9 13 M19 9L15 13 M5 23L9 19 M19 23L15 19" stroke="#1d1d1d" stroke-width="1"/><path d="M5 9L9.5 4.5H23.5V18.5L19 23 M19 9L23.5 4.5 M5 9H19V23H5Z" fill="none" stroke="#e8e8e8" stroke-width="1.2" stroke-linejoin="round" stroke-linecap="round"/></svg>
<div class="a" style="left:11px;top:490px;width:38px;height:34px;background:rgba(29,29,29,.93);border-radius:0 0 0 0"></div>
<svg style="left:16px;top:493.5px" width="28" height="28" viewBox="0 0 28 28"><path d="M5 12L8 6L12 4H20L23 8V13L19 12Z" fill="#8edcb2"/><path d="M5 12H19V23H5Z M19 23L23 19V8 M19 12L23 8" fill="none" stroke="#e8e8e8" stroke-width="1.2" stroke-linejoin="round" stroke-linecap="round"/></svg>
<div class="a" style="left:11px;top:525px;width:38px;height:34px;background:rgba(29,29,29,.93);border-radius:0 0 0 0"></div>
<svg style="left:16px;top:528.5px" width="28" height="28" viewBox="0 0 28 28"><path d="M5 10L9.5 5.5H23.5V18.5L19 23H5Z M19 10V23 M5 10H19 M19 10L23.5 5.5" fill="none" stroke="#e8e8e8" stroke-width="1.2" stroke-linejoin="round" stroke-linecap="round"/><path d="M12 10V23 M12 10L16.5 5.5" fill="none" stroke="#8edcb2" stroke-width="1.6"/></svg>
<svg style="left:43px;top:554px" width="4" height="4"><path d="M4 0V4H0Z" fill="#8a8a8a"/></svg>
<div class="a" style="left:11px;top:560px;width:38px;height:34px;background:rgba(29,29,29,.93);border-radius:0 0 0 0"></div>
<svg style="left:16px;top:563.5px" width="28" height="28" viewBox="0 0 28 28"><path d="M5 10L9.5 5.5H23.5V18.5L19 23H5Z M19 10V23 M5 10H19 M19 10L23.5 5.5" fill="none" stroke="#e8e8e8" stroke-width="1.2" stroke-linejoin="round" stroke-linecap="round"/><path d="M9 9L15 4.5 M9 9L14.5 24" fill="none" stroke="#8edcb2" stroke-width="1.5"/><circle cx="9" cy="9" r="1.6" fill="#8edcb2"/><circle cx="15" cy="4.5" r="1.6" fill="#8edcb2"/><circle cx="14.5" cy="24" r="1.6" fill="#8edcb2"/></svg>
<svg style="left:43px;top:589px" width="4" height="4"><path d="M4 0V4H0Z" fill="#8a8a8a"/></svg>
<div class="a" style="left:11px;top:595px;width:38px;height:34px;background:rgba(29,29,29,.93);border-radius:0 0 0 0"></div>
<svg style="left:16px;top:598.5px" width="28" height="28" viewBox="0 0 28 28"><path d="M11 5L22 8.5L23 23H7.5L6 14Z" fill="#8edcb2"/><circle cx="11" cy="5" r="1.7" fill="#fff"/><circle cx="22" cy="8.5" r="1.7" fill="#fff"/><circle cx="23" cy="23" r="1.7" fill="#fff"/><circle cx="7.5" cy="23" r="1.7" fill="#fff"/><circle cx="6" cy="14" r="1.7" fill="#fff"/></svg>
<div class="a" style="left:11px;top:630px;width:38px;height:34px;background:rgba(29,29,29,.93);border-radius:0 0 0 0"></div>
<svg style="left:16px;top:633.5px" width="28" height="28" viewBox="0 0 28 28"><path d="M14 15V4.5A10.5 10.5 0 1 0 24.2 17.5Z" fill="#8edcb2"/><path d="M14 15L4.5 10 M14 15L4.5 20 M14 15L10 25 M14 15L19 24.5 M14 15L7 7 M14 15L14 25.5" stroke="#1d1d1d" stroke-width="0.9"/><path d="M14 4.5A10 10 0 0 1 21 9L14 15Z M21 9C24 7 25.5 10 24.2 17.5" fill="none" stroke="#e8e8e8" stroke-width="1.2" stroke-linejoin="round" stroke-linecap="round"/></svg>
<div class="a" style="left:11px;top:665px;width:38px;height:34px;background:rgba(29,29,29,.93);border-radius:0 0 0 0"></div>
<svg style="left:16px;top:668.5px" width="28" height="28" viewBox="0 0 28 28"><path d="M6 9C9 4.5 19 4.5 22 9C24 13 24 17 22 21C19 24.5 9 24.5 6 21C4 17 4 13 6 9Z" fill="#dcc3ee"/><path d="M14 6V24 M4.8 14.5C10 13 18 13 23.2 14.5 M6 9C10 11 18 11 22 9" fill="none" stroke="#1d1d1d" stroke-width="1"/></svg>
<svg style="left:43px;top:694px" width="4" height="4"><path d="M4 0V4H0Z" fill="#8a8a8a"/></svg>
<div class="a" style="left:11px;top:700px;width:38px;height:34px;background:rgba(29,29,29,.93);border-radius:0 0 0 0"></div>
<svg style="left:16px;top:703.5px" width="28" height="28" viewBox="0 0 28 28"><path d="M8 11L12.5 6.5H24V19L19.5 23.5H8Z M19.5 11V23.5 M8 11H19.5 M19.5 11L24 6.5" fill="none" stroke="#e8e8e8" stroke-width="1.2" stroke-linejoin="round" stroke-linecap="round"/><path d="M5.5 23.5V12L10 7" fill="none" stroke="#e8e8e8" stroke-width="1.2" stroke-linejoin="round" stroke-linecap="round"/><path d="M3 6L6 3 M3 3H6.5V6.5" fill="none" stroke="#dcc3ee" stroke-width="1.2"/></svg>
<svg style="left:43px;top:729px" width="4" height="4"><path d="M4 0V4H0Z" fill="#8a8a8a"/></svg>
<div class="a" style="left:11px;top:735px;width:38px;height:34px;background:rgba(29,29,29,.93);border-radius:0 0 0 0"></div>
<svg style="left:16px;top:738.5px" width="28" height="28" viewBox="0 0 28 28"><rect x="8" y="8" width="12" height="12" fill="none" stroke="#cfcfcf" stroke-width="1.2"/><path d="M9 9L19 19 M19 9L9 19" stroke="#e8e8e8" stroke-width="1.6"/><path d="M14 1.5L17 5.5H11Z M14 26.5L17 22.5H11Z M1.5 14L5.5 11V17Z M26.5 14L22.5 11V17Z" fill="#dcc3ee"/><path d="M10 12.5L11.5 14L10 15.5 M18 12.5L16.5 14L18 15.5 M12.5 10L14 11.5L15.5 10 M12.5 18L14 16.5L15.5 18" fill="none" stroke="#1d1d1d" stroke-width="0.7"/></svg>
<svg style="left:43px;top:764px" width="4" height="4"><path d="M4 0V4H0Z" fill="#8a8a8a"/></svg>
<div class="a" style="left:11px;top:770px;width:38px;height:34px;background:rgba(29,29,29,.93);border-radius:0 0 0 0"></div>
<svg style="left:16px;top:773.5px" width="28" height="28" viewBox="0 0 28 28"><path d="M2 9.5L14 5.5L25 17.5L13.5 22.5Z" fill="#dcc3ee"/><path d="M14 5.5L16 9.5L25 17.5 M13.5 22.5L16 19.5L25 17.5" fill="none" stroke="#1d1d1d" stroke-width="0.9"/><path d="M20 3.5H25.5 M22.5 1.5L20 3.5L22.5 5.5" fill="none" stroke="#dcc3ee" stroke-width="1.2"/></svg>
<svg style="left:43px;top:799px" width="4" height="4"><path d="M4 0V4H0Z" fill="#8a8a8a"/></svg>
<div class="a" style="left:11px;top:805px;width:38px;height:34px;background:rgba(29,29,29,.93);border-radius:0 0 4px 4px"></div>
<svg style="left:16px;top:808px" width="28" height="28" viewBox="0 0 28 28"><path d="M8 12L12.5 7.5H24V19.5L19.5 24H8 M19.5 12V24 M19.5 12L24 7.5 M2.5 16.5L8 24 M2.5 16.5L19.5 12 M2.5 16.5L12.5 7.5" fill="none" stroke="#e8e8e8" stroke-width="1.2" stroke-linejoin="round" stroke-linecap="round"/><circle cx="2.5" cy="16.5" r="1.7" fill="#dcc3ee"/></svg>
<svg style="left:43px;top:833px" width="4" height="4"><path d="M4 0V4H0Z" fill="#8a8a8a"/></svg>
<div class="a" style="left:1343px;top:80.5px;width:213.5px;height:208px;background:rgba(57,57,57,.93);border-radius:4px"></div>
<div class="a" style="left:1343px;top:292.5px;width:213.5px;height:23.5px;background:rgba(57,57,57,.93);border-radius:4px"></div>
<svg style="left:1351px;top:89.5px" width="10" height="8"><path d="M1.5 2L5 5.5L8.5 2" class="ic" style="stroke:#e6e6e6"/></svg>
<span class="t" style="left:1365.5px;top:93px">Transform</span>
<svg style="left:1535.5px;top:90.5px" width="12" height="6"><rect x="0" y="0.5" width="1.2" height="1.2" fill="#8a8a8a"/><rect x="0" y="3.5" width="1.2" height="1.2" fill="#8a8a8a"/><rect x="3" y="0.5" width="1.2" height="1.2" fill="#8a8a8a"/><rect x="3" y="3.5" width="1.2" height="1.2" fill="#8a8a8a"/><rect x="6" y="0.5" width="1.2" height="1.2" fill="#8a8a8a"/><rect x="6" y="3.5" width="1.2" height="1.2" fill="#8a8a8a"/><rect x="9" y="0.5" width="1.2" height="1.2" fill="#8a8a8a"/><rect x="9" y="3.5" width="1.2" height="1.2" fill="#8a8a8a"/></svg>
<span class="t" style="left:1352px;top:123px">Vertex:</span>
<div class="a" style="left:1352px;top:134.5px;width:196px;height:17.5px;background:#545454;border-radius:4px 4px 0 0"></div>
<span class="t" style="left:1367px;top:143.25px">X</span>
<span class="t tr n" style="left:1535px;top:143.25px">0.33799 m</span>
<div class="a" style="left:1352px;top:153px;width:196px;height:18.5px;background:#545454;border-radius:0"></div>
<span class="t" style="left:1367px;top:162.25px">Y</span>
<span class="t tr n" style="left:1535px;top:162.25px">-0.96419 m</span>
<div class="a" style="left:1352px;top:172.5px;width:196px;height:19.5px;background:#545454;border-radius:0 0 4px 4px"></div>
<span class="t" style="left:1367px;top:182.25px">Z</span>
<span class="t tr n" style="left:1535px;top:182.25px">0.66592 m</span>
<div class="a" style="left:1352px;top:196px;width:97px;height:18px;background:#545454;border-radius:4px 0 0 4px"></div>
<div class="a" style="left:1449.5px;top:196px;width:98.5px;height:18px;background:#4772b3;border-radius:0 4px 4px 0"></div>
<span class="t tc" style="left:1400px;top:205px">Global</span>
<span class="t tc" style="left:1498px;top:205px;color:#fff">Local</span>
<span class="t" style="left:1352px;top:227px">Vertex Data:</span>
<div class="a" style="left:1352px;top:240px;width:196px;height:18px;background:#545454;border-radius:4px"></div>
<span class="t" style="left:1367px;top:249px">Bevel Weight</span>
<span class="t tr n" style="left:1535px;top:249px">0.00</span>
<div class="a" style="left:1352px;top:262.5px;width:196px;height:18px;background:#545454;border-radius:4px"></div>
<span class="t" style="left:1367px;top:271.5px">Vertex Crease</span>
<span class="t tr n" style="left:1535px;top:271.5px">0.00</span>
<svg style="left:1352px;top:299px" width="8" height="10"><path d="M2 1.5L5.5 5L2 8.5" class="ic" style="stroke:#e6e6e6"/></svg>
<span class="t" style="left:1365.5px;top:304px">Properties</span>
<svg style="left:1535.5px;top:301.5px" width="12" height="6"><rect x="0" y="0.5" width="1.2" height="1.2" fill="#8a8a8a"/><rect x="0" y="3.5" width="1.2" height="1.2" fill="#8a8a8a"/><rect x="3" y="0.5" width="1.2" height="1.2" fill="#8a8a8a"/><rect x="3" y="3.5" width="1.2" height="1.2" fill="#8a8a8a"/><rect x="6" y="0.5" width="1.2" height="1.2" fill="#8a8a8a"/><rect x="6" y="3.5" width="1.2" height="1.2" fill="#8a8a8a"/><rect x="9" y="0.5" width="1.2" height="1.2" fill="#8a8a8a"/><rect x="9" y="3.5" width="1.2" height="1.2" fill="#8a8a8a"/></svg>
<div class="a" style="left:1564px;top:83.5px;width:17px;height:39.5px;background:rgba(61,61,61,.95);border-radius:4px 0 0 4px;border:1px solid rgba(20,20,20,.5);border-right:none"></div>
<span class="t" style="left:1572.5px;top:103.25px;color:#fff;transform:translate(-50%,0) rotate(90deg)">Item</span>
<div class="a" style="left:1564px;top:129px;width:17px;height:38.5px;background:rgba(29,29,29,.9);border-radius:4px 0 0 4px;border:1px solid rgba(20,20,20,.5);border-right:none"></div>
<span class="t" style="left:1572.5px;top:148.25px;color:#b8b8b8;transform:translate(-50%,0) rotate(90deg)">Tool</span>
<div class="a" style="left:1564px;top:173px;width:17px;height:39px;background:rgba(29,29,29,.9);border-radius:4px 0 0 4px;border:1px solid rgba(20,20,20,.5);border-right:none"></div>
<span class="t" style="left:1572.5px;top:192.5px;color:#b8b8b8;transform:translate(-50%,0) rotate(90deg)">View</span>
<div class="a" style="left:1564px;top:217.5px;width:17px;height:67.5px;background:rgba(29,29,29,.9);border-radius:4px 0 0 4px;border:1px solid rgba(20,20,20,.5);border-right:none"></div>
<span class="t" style="left:1572.5px;top:251.25px;color:#b8b8b8;transform:translate(-50%,0) rotate(90deg)">Animation</span>
<div class="a" style="left:1564px;top:291.5px;width:17px;height:44.5px;background:rgba(29,29,29,.9);border-radius:4px 0 0 4px;border:1px solid rgba(20,20,20,.5);border-right:none"></div>
<span class="t" style="left:1572.5px;top:313.75px;color:#b8b8b8;transform:translate(-50%,0) rotate(90deg)">Rigify</span>
<div class="a" style="left:1564px;top:342px;width:17px;height:85px;background:rgba(29,29,29,.9);border-radius:4px 0 0 4px;border:1px solid rgba(20,20,20,.5);border-right:none"></div>
<span class="t" style="left:1572.5px;top:384.5px;color:#b8b8b8;transform:translate(-50%,0) rotate(90deg)">SpeedRetopo</span>
<div class="a" style="left:1564px;top:433.5px;width:17px;height:55px;background:rgba(29,29,29,.9);border-radius:4px 0 0 4px;border:1px solid rgba(20,20,20,.5);border-right:none"></div>
<span class="t" style="left:1572.5px;top:461px;color:#b8b8b8;transform:translate(-50%,0) rotate(90deg)">SFamily</span>
<div class="a" style="left:1564px;top:494.5px;width:17px;height:37px;background:rgba(29,29,29,.9);border-radius:4px 0 0 4px;border:1px solid rgba(20,20,20,.5);border-right:none"></div>
<span class="t" style="left:1572.5px;top:513px;color:#b8b8b8;transform:translate(-50%,0) rotate(90deg)">Edit</span>
<div class="a" style="left:1564px;top:537px;width:17px;height:71px;background:rgba(29,29,29,.9);border-radius:4px 0 0 4px;border:1px solid rgba(20,20,20,.5);border-right:none"></div>
<span class="t" style="left:1572.5px;top:572.5px;color:#b8b8b8;transform:translate(-50%,0) rotate(90deg)">PSD Layers</span>
<div class="a" style="left:63px;top:1124.5px;width:159.5px;height:23.5px;background:rgba(24,24,24,.95);border-radius:4px"></div>
<svg style="left:72.5px;top:1132px" width="8" height="10"><path d="M2 1.5L5.5 5L2 8.5" class="ic" style="stroke:#c8c8c8"/></svg>
<span class="t" style="left:85.5px;top:1137px;color:#d8d8d8">Move</span>
<!-- ===== OUTLINER ===== -->
<div class="a" style="left:1588px;top:26px;width:329px;height:197px;background:#282828;border-radius:6px;overflow:hidden"></div>
<div class="a" style="left:1588px;top:26px;width:329px;height:26px;background:#303030;border-radius:6px 6px 0 0;"></div>
<div class="a" style="left:1597px;top:28.5px;width:32px;height:19px;background:#232323;border-radius:4px;border:1px solid #3a3a3a"></div>
<svg style="left:1600px;top:30px" width="28" height="16" viewBox="0 0 28 16"><rect x="1" y="1.5" width="5" height="3.4" fill="#e6e6e6"/><rect x="6" y="6.5" width="7" height="3.2" fill="#e6e6e6"/><rect x="6" y="11.5" width="7" height="3.2" fill="#e6e6e6"/><path d="M3 5V13H6 M3 8H6" class="ic"/><path d="M18.5 6.5L21 9L23.5 6.5" class="ic"/></svg>
<div class="a" style="left:1634.5px;top:28.5px;width:32px;height:19px;background:#232323;border-radius:4px;border:1px solid #3a3a3a"></div>
<svg style="left:1638px;top:30px" width="28" height="16" viewBox="0 0 28 16"><path d="M1.5 4.5V13.5H10.5 M3.5 2.8V11.5H12.3" class="ic"/><rect x="5.5" y="0.8" width="9" height="9" rx="1" fill="#e6e6e6"/><path d="M6.5 8.5L9 4.5L10.5 6.5L11.5 5.5L13.5 8.5Z" fill="#232323"/><circle cx="12.3" cy="3" r="0.9" fill="#232323"/><path d="M18.5 6.5L21 9L23.5 6.5" class="ic"/></svg>
<div class="a" style="left:1683.5px;top:28.5px;width:117px;height:19px;background:#1d1d1d;border-radius:4px;border:1px solid #3a3a3a"></div>
<svg style="left:1687px;top:31px" width="14" height="14" viewBox="0 0 14 14"><circle cx="5.5" cy="5.5" r="4" class="ic" style="stroke-width:1.3"/><path d="M8.5 8.5L13 13" class="ic" style="stroke-width:1.3"/></svg>
<span class="t dim2" style="left:1709px;top:38px;">Search</span>
<div class="a" style="left:1853.5px;top:28.5px;width:31px;height:19px;background:#232323;border-radius:4px;border:1px solid #3a3a3a"></div>
<svg style="left:1856px;top:30.5px" width="28" height="15" viewBox="0 0 28 15"><path d="M1.5 1.5H12.5L8.5 7V13L5.5 11V7Z" class="ic" style="stroke-width:1.2"/><path d="M19.5 6L22 8.5L24.5 6" class="ic"/></svg>
<div class="a" style="left:1891px;top:29px;width:19px;height:18.5px;background:#4f4f4f;border-radius:4px;"></div>
<svg style="left:1893px;top:30.5px" width="16" height="16" viewBox="0 0 16 16"><path d="M2 5.5V14H11V8 M1 3.5H9V5.5H1Z M5 9H8" class="ic" style="stroke:#d0d0d0"/><circle cx="12" cy="3.8" r="3.3" fill="#e6e6e6"/><path d="M12 1.8V5.8 M10 3.8H14" stroke="#4f4f4f" stroke-width="1.1"/></svg>
<div class="a" style="left:1588px;top:52px;width:329px;height:4px;background:#3b5689;border-radius:0;border-top:1px solid #4772b3;border-bottom:1px solid #4772b3"></div>
<div class="a" style="left:1588px;top:78px;width:329px;height:20px;background:#2b2b2b;border-radius:0;"></div>
<div class="a" style="left:1588px;top:118px;width:329px;height:20px;background:#2b2b2b;border-radius:0;"></div>
<div class="a" style="left:1588px;top:158px;width:329px;height:20px;background:#2b2b2b;border-radius:0;"></div>
<div class="a" style="left:1588px;top:198px;width:329px;height:20px;background:#2b2b2b;border-radius:0;"></div>
<div class="a" style="left:1618px;top:56px;width:1px;height:167px;background:#4a4a4a;border-radius:0;"></div>
<div class="a" style="left:1638px;top:56px;width:1px;height:82px;background:#4a4a4a;border-radius:0;"></div>
<div class="a" style="left:1638px;top:160px;width:1px;height:16px;background:#3a3a3a;border-radius:0;"></div>
<svg style="left:1600px;top:66px" width="4" height="4" viewBox="0 0 4 4"><circle cx="2" cy="2" r="1.7" fill="#e6e6e6"/></svg>
<svg style="left:1655px;top:63px" width="8" height="10"><path d="M2 1.5L5.5 5L2 8.5" class="ic" style="stroke:#c8c8c8;stroke-width:1.1"/></svg>
<svg style="left:1671px;top:60px" width="16" height="16" viewBox="0 0 16 16"><path d="M2 2.5H14L8 14.5Z" fill="none" stroke="#e39a4e" stroke-width="2.6" stroke-linejoin="round"/></svg>
<span class="t " style="left:1693.5px;top:68px;">long sleeve button up shirt</span>
<svg style="left:1870.5px;top:62px" width="16" height="12" viewBox="0 0 16 12"><path d="M0.8 6C3.8 0.8 12.2 0.8 15.2 6C12.2 11.2 3.8 11.2 0.8 6Z" fill="#e6e6e6"/><circle cx="8" cy="6" r="3.3" fill="#282828"/><circle cx="8" cy="6" r="1.6" fill="#e6e6e6"/></svg>
<svg style="left:1890.5px;top:61px" width="16" height="14" viewBox="0 0 16 14"><path d="M1 3.5H4.5L5.5 1.5H10.5L11.5 3.5H15V13H1Z" fill="#e6e6e6"/><circle cx="8" cy="8" r="3.4" fill="#282828"/><circle cx="8" cy="8" r="2" fill="none" stroke="#e6e6e6" stroke-width="1.1"/></svg>
<svg style="left:1600px;top:86px" width="4" height="4" viewBox="0 0 4 4"><circle cx="2" cy="2" r="1.7" fill="#e6e6e6"/></svg>
<svg style="left:1655px;top:83px" width="8" height="10"><path d="M2 1.5L5.5 5L2 8.5" class="ic" style="stroke:#6a6a6a;stroke-width:1.1"/></svg>
<svg style="left:1671px;top:80px" width="16" height="16" viewBox="0 0 16 16"><path d="M2 2.5H14L8 14.5Z" fill="none" stroke="#7d6046" stroke-width="2.6" stroke-linejoin="round"/></svg>
<span class="t dim2" style="left:1693.5px;top:88px;">long sleeve button up shirt mi</span>
<svg style="left:1870.5px;top:82px" width="16" height="12" viewBox="0 0 16 12"><path d="M1 4.5C4 10 12 10 15 4.5" class="ic" style="stroke:#8a8a8a"/></svg>
<svg style="left:1890.5px;top:81px" width="16" height="14" viewBox="0 0 16 14"><path d="M1 3.5H4.5L5.5 1.5H10.5L11.5 3.5H15V13H1Z" class="ic" style="stroke:#c0c0c0"/><path d="M6 6L10 10M10 6L6 10" class="ic" style="stroke:#c0c0c0"/></svg>
<svg style="left:1600px;top:106px" width="4" height="4" viewBox="0 0 4 4"><circle cx="2" cy="2" r="1.7" fill="#e6e6e6"/></svg>
<svg style="left:1655px;top:103px" width="8" height="10"><path d="M2 1.5L5.5 5L2 8.5" class="ic" style="stroke:#c8c8c8;stroke-width:1.1"/></svg>
<svg style="left:1671px;top:100px" width="16" height="16" viewBox="0 0 16 16"><path d="M2 2.5H14L8 14.5Z" fill="none" stroke="#e39a4e" stroke-width="2.6" stroke-linejoin="round"/></svg>
<span class="t " style="left:1693.5px;top:108px;">pants</span>
<svg style="left:1744px;top:100px" width="16" height="16" viewBox="0 0 16 16"><path d="M10.5 1.5C8 1.5 6.5 4 7.5 6.5L2 12C1 13 3 15 4 14L9.5 8.5C12 9.5 14.5 8 14.5 5.5L12 8L9.5 6.5L9 4Z" fill="none" stroke="#6a86d8" stroke-width="1.3" stroke-linejoin="round"/></svg>
<svg style="left:1764px;top:100px" width="16" height="16" viewBox="0 0 16 16"><path d="M3 3H13L8 13.5Z" fill="none" stroke="#3fc59a" stroke-width="1.2"/><rect x="1.2" y="1.2" width="3.4" height="3.4" fill="#282828" stroke="#3fc59a" stroke-width="1.1"/><rect x="11.4" y="1.2" width="3.4" height="3.4" fill="#282828" stroke="#3fc59a" stroke-width="1.1"/><rect x="6.3" y="11.6" width="3.4" height="3.4" fill="#282828" stroke="#3fc59a" stroke-width="1.1"/></svg>
<svg style="left:1870.5px;top:102px" width="16" height="12" viewBox="0 0 16 12"><path d="M0.8 6C3.8 0.8 12.2 0.8 15.2 6C12.2 11.2 3.8 11.2 0.8 6Z" fill="#e6e6e6"/><circle cx="8" cy="6" r="3.3" fill="#282828"/><circle cx="8" cy="6" r="1.6" fill="#e6e6e6"/></svg>
<svg style="left:1890.5px;top:101px" width="16" height="14" viewBox="0 0 16 14"><path d="M1 3.5H4.5L5.5 1.5H10.5L11.5 3.5H15V13H1Z" fill="#e6e6e6"/><circle cx="8" cy="8" r="3.4" fill="#282828"/><circle cx="8" cy="8" r="2" fill="none" stroke="#e6e6e6" stroke-width="1.1"/></svg>
<svg style="left:1600px;top:126px" width="4" height="4" viewBox="0 0 4 4"><circle cx="2" cy="2" r="1.7" fill="#e6e6e6"/></svg>
<svg style="left:1655px;top:123px" width="8" height="10"><path d="M2 1.5L5.5 5L2 8.5" class="ic" style="stroke:#c8c8c8;stroke-width:1.1"/></svg>
<svg style="left:1671px;top:120px" width="16" height="16" viewBox="0 0 16 16"><path d="M2 2.5H14L8 14.5Z" fill="none" stroke="#e39a4e" stroke-width="2.6" stroke-linejoin="round"/></svg>
<span class="t " style="left:1693.5px;top:128px;">pilot</span>
<svg style="left:1739px;top:120px" width="16" height="16" viewBox="0 0 16 16"><path d="M10.5 1.5C8 1.5 6.5 4 7.5 6.5L2 12C1 13 3 15 4 14L9.5 8.5C12 9.5 14.5 8 14.5 5.5L12 8L9.5 6.5L9 4Z" fill="none" stroke="#6a86d8" stroke-width="1.3" stroke-linejoin="round"/></svg>
<svg style="left:1759px;top:120px" width="16" height="16" viewBox="0 0 16 16"><path d="M3 3H13L8 13.5Z" fill="none" stroke="#3fc59a" stroke-width="1.2"/><rect x="1.2" y="1.2" width="3.4" height="3.4" fill="#282828" stroke="#3fc59a" stroke-width="1.1"/><rect x="11.4" y="1.2" width="3.4" height="3.4" fill="#282828" stroke="#3fc59a" stroke-width="1.1"/><rect x="6.3" y="11.6" width="3.4" height="3.4" fill="#282828" stroke="#3fc59a" stroke-width="1.1"/></svg>
<svg style="left:1778px;top:120px" width="16" height="16" viewBox="0 0 16 16"><path d="M3 14C1.5 9 2.5 4 5 1.5 M7.5 14C6.5 10 8 6 10.5 4.5 M11.5 14C11 11.5 12 9.5 14 8.5" fill="none" stroke="#e39a4e" stroke-width="1.9" stroke-linecap="round"/></svg>
<span class="t " style="left:1792px;top:131px;font-size:9px;color:#d8d8d8">3</span>
<svg style="left:1870.5px;top:122px" width="16" height="12" viewBox="0 0 16 12"><path d="M0.8 6C3.8 0.8 12.2 0.8 15.2 6C12.2 11.2 3.8 11.2 0.8 6Z" fill="#e6e6e6"/><circle cx="8" cy="6" r="3.3" fill="#282828"/><circle cx="8" cy="6" r="1.6" fill="#e6e6e6"/></svg>
<svg style="left:1890.5px;top:121px" width="16" height="14" viewBox="0 0 16 14"><path d="M1 3.5H4.5L5.5 1.5H10.5L11.5 3.5H15V13H1Z" fill="#e6e6e6"/><circle cx="8" cy="8" r="3.4" fill="#282828"/><circle cx="8" cy="8" r="2" fill="none" stroke="#e6e6e6" stroke-width="1.1"/></svg>
<svg style="left:1634px;top:144px" width="10" height="8"><path d="M1.5 2L5 5.5L8.5 2" class="ic" style="stroke:#6a6a6a;stroke-width:1.1"/></svg>
<svg style="left:1650px;top:140.5px" width="16" height="15" viewBox="0 0 16 15"><path d="M1 1H15V4H1Z" fill="#6e6e6e"/><path d="M2 5.5H14V14H2Z" fill="#6e6e6e"/><rect x="5.5" y="7.5" width="5" height="1.6" fill="#282828"/></svg>
<span class="t dim2" style="left:1673.3px;top:148px;">helpers</span>
<svg style="left:1852.5px;top:142.5px" width="11" height="11" viewBox="0 0 11 11"><rect x="0" y="0" width="11" height="11" rx="2" fill="#e6e6e6"/><path d="M2.5 5.5L4.7 8L8.5 3" fill="none" stroke="#1d1d1d" stroke-width="1.6"/></svg>
<svg style="left:1870.5px;top:142px" width="16" height="12" viewBox="0 0 16 12"><path d="M1 4.5C4 10 12 10 15 4.5" class="ic" style="stroke:#4e4e4e"/></svg>
<svg style="left:1890.5px;top:141px" width="16" height="14" viewBox="0 0 16 14"><path d="M1 3.5H4.5L5.5 1.5H10.5L11.5 3.5H15V13H1Z" class="ic" style="stroke:#4a4a4a"/><path d="M6 6L10 10M10 6L6 10" class="ic" style="stroke:#4a4a4a"/></svg>
<svg style="left:1655px;top:163px" width="8" height="10"><path d="M2 1.5L5.5 5L2 8.5" class="ic" style="stroke:#6a6a6a;stroke-width:1.1"/></svg>
<svg style="left:1671px;top:160px" width="16" height="16" viewBox="0 0 16 16"><circle cx="8" cy="2.8" r="2.2" fill="#8a6548"/><path d="M1.5 5.5L6 7L8 6.5L10 7L14.5 5.5L14.5 7.5L10.5 9L12.5 14.5H10.5L8 10.5L5.5 14.5H3.5L5.5 9L1.5 7.5Z" fill="#8a6548"/></svg>
<span class="t dim2" style="left:1693.5px;top:168px;">metarig</span>
<svg style="left:1755px;top:160px" width="16" height="16" viewBox="0 0 16 16"><circle cx="9" cy="2.5" r="1.5" fill="none" stroke="#2e8f72" stroke-width="1"/><path d="M2 2L7 5.5L12 6L14.5 9 M7 5.5L8 10L4 14.5 M8 10L12 11L13.5 14.5" fill="none" stroke="#2e8f72" stroke-width="1.1"/></svg>
<svg style="left:1775px;top:160px" width="16" height="16" viewBox="0 0 16 16"><circle cx="9" cy="2.5" r="1.5" fill="none" stroke="#2e8f72" stroke-width="1"/><rect x="1.5" y="2.5" width="3.5" height="3" fill="none" stroke="#2e8f72" stroke-width="1"/><path d="M5 4L9 5.5L14 4.5 M9 5.5V10L6 14.5 M9 10L12.5 14.5" fill="none" stroke="#2e8f72" stroke-width="1.1"/></svg>
<svg style="left:1870.5px;top:162px" width="16" height="12" viewBox="0 0 16 12"><path d="M0.8 6C3.8 0.8 12.2 0.8 15.2 6C12.2 11.2 3.8 11.2 0.8 6Z" fill="#4a4a4a"/><circle cx="8" cy="6" r="3.3" fill="#282828"/><circle cx="8" cy="6" r="1.6" fill="#4a4a4a"/></svg>
<svg style="left:1890.5px;top:161px" width="16" height="14" viewBox="0 0 16 14"><path d="M1 3.5H4.5L5.5 1.5H10.5L11.5 3.5H15V13H1Z" class="ic" style="stroke:#4a4a4a"/><path d="M6 6L10 10M10 6L6 10" class="ic" style="stroke:#4a4a4a"/></svg>
<svg style="left:1635px;top:183px" width="8" height="10"><path d="M2 1.5L5.5 5L2 8.5" class="ic" style="stroke:#c8c8c8;stroke-width:1.1"/></svg>
<svg style="left:1650px;top:180px" width="17" height="16" viewBox="0 0 17 16"><circle cx="4.5" cy="4" r="3.2" fill="#e39a4e"/><circle cx="11" cy="4" r="3.2" fill="#e39a4e"/><rect x="2" y="7.5" width="10.5" height="6.5" rx="1" fill="#e39a4e"/><path d="M12.5 10L16.5 8V14L12.5 12Z" fill="#e39a4e"/><circle cx="4.5" cy="4" r="1" fill="#282828"/><circle cx="11" cy="4" r="1" fill="#282828"/></svg>
<span class="t " style="left:1673.3px;top:188px;">Camera</span>
<div class="a" style="left:1734px;top:178.5px;width:20px;height:19px;background:#5a5a5a;border-radius:4px;border:1px solid #6a6a6a"></div>
<svg style="left:1736px;top:180px" width="16" height="16" viewBox="0 0 16 16"><path d="M3 7C1 5 2 2 4.5 2.5C5.5 0.5 9 0.5 10 2.5C12.5 2 14 4.5 12.5 6.5" fill="none" stroke="#3fc59a" stroke-width="1.1"/><circle cx="8" cy="5" r="1.2" fill="none" stroke="#3fc59a" stroke-width="0.9"/><rect x="2" y="8.5" width="8.5" height="5.5" fill="none" stroke="#3fc59a" stroke-width="1.2"/><path d="M10.5 10.5L14.5 9V14L10.5 12.5" fill="none" stroke="#3fc59a" stroke-width="1.2"/></svg>
<svg style="left:1870.5px;top:182px" width="16" height="12" viewBox="0 0 16 12"><path d="M0.8 6C3.8 0.8 12.2 0.8 15.2 6C12.2 11.2 3.8 11.2 0.8 6Z" fill="#e6e6e6"/><circle cx="8" cy="6" r="3.3" fill="#282828"/><circle cx="8" cy="6" r="1.6" fill="#e6e6e6"/></svg>
<svg style="left:1890.5px;top:181px" width="16" height="14" viewBox="0 0 16 14"><path d="M1 3.5H4.5L5.5 1.5H10.5L11.5 3.5H15V13H1Z" fill="#e6e6e6"/><circle cx="8" cy="8" r="3.4" fill="#282828"/><circle cx="8" cy="8" r="2" fill="none" stroke="#e6e6e6" stroke-width="1.1"/></svg>
<svg style="left:1635px;top:203px" width="8" height="10"><path d="M2 1.5L5.5 5L2 8.5" class="ic" style="stroke:#c8c8c8;stroke-width:1.1"/></svg>
<svg style="left:1650px;top:199.5px" width="16" height="17" viewBox="0 0 16 17"><path d="M8 0.8C4.5 0.8 2 3.3 2 6.5C2 8.8 3.5 10 4.5 11.5H11.5C12.5 10 14 8.8 14 6.5C14 3.3 11.5 0.8 8 0.8Z" fill="#e39a4e"/><rect x="5" y="12.5" width="6" height="1.5" fill="#e39a4e"/><rect x="5.5" y="14.8" width="5" height="1.5" fill="#e39a4e"/><path d="M5.5 6.5H7V8.5M10.5 6.5H9V8.5" stroke="#282828" stroke-width="1" fill="none"/></svg>
<span class="t " style="left:1673.3px;top:208px;">Light</span>
<svg style="left:1722.5px;top:200px" width="16" height="17" viewBox="0 0 16 17"><path d="M5.5 13.5C2.5 11.5 1.5 8 3 5C4.5 2 8.5 1 11.5 3C14.5 5 15 9.5 12 12.5L10.5 13.5" fill="none" stroke="#2eb58a" stroke-width="1.1"/><circle cx="8" cy="7.5" r="1.4" fill="none" stroke="#2eb58a" stroke-width="1"/><path d="M8 9V16" stroke="#2eb58a" stroke-width="1.1"/></svg>
<svg style="left:1870.5px;top:202px" width="16" height="12" viewBox="0 0 16 12"><path d="M0.8 6C3.8 0.8 12.2 0.8 15.2 6C12.2 11.2 3.8 11.2 0.8 6Z" fill="#e6e6e6"/><circle cx="8" cy="6" r="3.3" fill="#282828"/><circle cx="8" cy="6" r="1.6" fill="#e6e6e6"/></svg>
<svg style="left:1890.5px;top:201px" width="16" height="14" viewBox="0 0 16 14"><path d="M1 3.5H4.5L5.5 1.5H10.5L11.5 3.5H15V13H1Z" fill="#e6e6e6"/><circle cx="8" cy="8" r="3.4" fill="#282828"/><circle cx="8" cy="8" r="2" fill="none" stroke="#e6e6e6" stroke-width="1.1"/></svg>
<svg style="left:1650px;top:218px;overflow:hidden" width="16" height="6" viewBox="0 0 16 6"><circle cx="8" cy="8" r="7" fill="#e39a4e"/></svg>
<svg style="left:1745px;top:219px;overflow:hidden" width="16" height="5" viewBox="0 0 16 5"><circle cx="8" cy="7" r="6" fill="none" stroke="#2eb58a" stroke-width="1.1"/></svg>
<svg style="left:1871px;top:220px;overflow:hidden" width="16" height="4" viewBox="0 0 16 4"><path d="M1 5C4 0 12 0 15 5" fill="none" stroke="#e6e6e6" stroke-width="1.5"/></svg>
<svg style="left:1891px;top:220px;overflow:hidden" width="16" height="4" viewBox="0 0 16 4"><path d="M4 4L5.5 1.5H10.5L12 4" fill="#e6e6e6"/></svg>
<svg style="left:1592px;top:52px;overflow:hidden" width="16" height="4" viewBox="0 0 16 4"><path d="M1 0V3H15V0" fill="none" stroke="#a9c0ea" stroke-width="1.2"/></svg>
<svg style="left:1669px;top:52px;overflow:hidden" width="20" height="4" viewBox="0 0 20 4"><ellipse cx="10" cy="-3" rx="9" ry="6" fill="#a27a5a"/></svg>
<svg style="left:1765px;top:52px;overflow:hidden" width="22" height="4" viewBox="0 0 22 4"><ellipse cx="11" cy="-3" rx="10" ry="6" fill="#3f7f86"/></svg>
<div class="a" style="left:1911.5px;top:121px;width:3px;height:71px;background:#4d4d4d;border-radius:2px;"></div>
<div class="a" style="left:1597px;top:218.5px;width:250px;height:2.5px;background:#414141;border-radius:2px;"></div>
<!-- ===== PROPERTIES EDITOR ===== -->
<div class="a" style="left:1588px;top:227px;width:329px;height:927px;background:#303030;border-radius:6px;"></div>
<div class="a" style="left:1588px;top:253px;width:30px;height:901px;background:#1b1b1b;border-radius:0 0 0 6px;"></div>
<div class="a" style="left:1598.5px;top:229.5px;width:30px;height:19px;background:#232323;border-radius:4px;border:1px solid #3a3a3a"></div>
<svg style="left:1601px;top:231px" width="28" height="16" viewBox="0 0 28 16"><rect x="1.5" y="1.5" width="12.5" height="5.4" rx="2.7" fill="#e6e6e6"/><rect x="1.5" y="9" width="12.5" height="5.4" rx="2.7" fill="#e6e6e6"/><circle cx="11" cy="4.2" r="1.7" fill="#232323"/><circle cx="4.5" cy="11.7" r="1.7" fill="#232323"/><path d="M19 6.5L21.5 9L24 6.5" class="ic"/></svg>
<div class="a" style="left:1697px;top:229.5px;width:116px;height:19px;background:#1d1d1d;border-radius:4px;border:1px solid #3a3a3a"></div>
<svg style="left:1700.5px;top:232px" width="14" height="14" viewBox="0 0 14 14"><circle cx="5.5" cy="5.5" r="4" class="ic" style="stroke-width:1.3"/><path d="M8.5 8.5L13 13" class="ic" style="stroke-width:1.3"/></svg>
<span class="t dim2" style="left:1722px;top:239px;">Search</span>
<div class="a" style="left:1890.5px;top:229.5px;width:19px;height:19px;background:#232323;border-radius:4px;border:1px solid #3a3a3a"></div>
<svg style="left:1895px;top:235.5px" width="10" height="8"><path d="M1.5 2L5 5.5L8.5 2" class="ic" style="stroke:#e6e6e6;stroke-width:1.1"/></svg>
<div class="a" style="left:1590px;top:258px;width:27px;height:31px;background:#212121;border-radius:4px;"></div>
<div class="a" style="left:1590px;top:296px;width:27px;height:142px;background:#212121;border-radius:4px;"></div>
<div class="a" style="left:1590px;top:445px;width:27px;height:28px;background:#212121;border-radius:4px;"></div>
<div class="a" style="left:1590px;top:480px;width:27px;height:199px;background:#212121;border-radius:4px;"></div>
<svg style="left:1596px;top:265.5px" width="16" height="16" viewBox="0 0 16 16"><path d="M3 1V6 M1.5 6.5H4.5V10H1.5Z M3 10V11.5" class="ic" style="stroke:#c4c4c4;stroke-width:1.3"/><ellipse cx="3" cy="13.5" rx="1.8" ry="2" fill="#c4c4c4"/><path d="M12 8V15" stroke="#c4c4c4" stroke-width="2.4"/><path d="M9 1.5V5C9 7 10.5 8 12 8C13.5 8 15 7 15 5V1.5" fill="none" stroke="#c4c4c4" stroke-width="2"/></svg>
<svg style="left:1596px;top:302.5px" width="16" height="16" viewBox="0 0 16 16"><path d="M2 5.5H14V14H2Z" class="ic" style="stroke:#c4c4c4;stroke-width:1.3"/><path d="M4 5V3.5H9V5 M14 7L15.5 6V12.5L14 11.5" class="ic" style="stroke:#c4c4c4"/><rect x="4.5" y="8" width="4" height="3.5" fill="#c4c4c4"/><path d="M10 8.5H12.5M10 10.5H12.5" stroke="#c4c4c4" stroke-width="1"/></svg>
<svg style="left:1596px;top:331px" width="16" height="16" viewBox="0 0 16 16"><path d="M2 2H14V7H2Z" fill="#c4c4c4"/><path d="M1 7H15V11H12.5V14.5H3.5V11H1Z" fill="#c4c4c4"/><rect x="5" y="8.5" width="6" height="5" fill="#1b1b1b"/><path d="M6 12.5L7.5 10.5L8.5 11.5L9.5 10L10.5 12.5Z" fill="#c4c4c4"/></svg>
<svg style="left:1596px;top:359px" width="16" height="16" viewBox="0 0 16 16"><path d="M1.5 5V14.5H11 M3.5 3V12.5H13" class="ic" style="stroke:#c4c4c4;stroke:#bababa"/><rect x="5.5" y="1" width="9.5" height="9.5" rx="1" fill="none" stroke="#bababa" stroke-width="1.2"/><path d="M6.5 9.5L9.5 5L11 7L12 6L14 9.5Z" fill="#bababa"/></svg>
<svg style="left:1596px;top:386.5px" width="16" height="16" viewBox="0 0 16 16"><path d="M5 1C7 4.5 8 7.5 8 9.5C8 11 6.7 12 5 12C3.3 12 2 11 2 9.5C2 7.5 3 4.5 5 1Z" fill="#c0c0c0"/><circle cx="12" cy="3" r="2" fill="#c0c0c0"/><circle cx="10.5" cy="11.5" r="3.2" fill="#1b1b1b" stroke="#c0c0c0" stroke-width="1.2"/><circle cx="10.5" cy="11.5" r="1" fill="#c0c0c0"/></svg>
<svg style="left:1596px;top:415px" width="16" height="16" viewBox="0 0 16 16"><circle cx="8" cy="8" r="6.5" fill="none" stroke="#c4505f" stroke-width="1.4"/><path d="M4 4.5C6 4 7 5.5 6.5 7C6 8.5 7.5 9.5 9 9C10.5 8.5 11.5 10 11 12 M9.5 2.5C10 4 11.5 4.5 13.5 5" fill="none" stroke="#c4505f" stroke-width="1.4"/></svg>
<svg style="left:1596px;top:451px" width="16" height="16" viewBox="0 0 16 16"><path d="M1.5 1.5H14.5V4.5H1.5Z" class="ic" style="stroke:#c4c4c4;stroke-width:1.3"/><path d="M2.5 5V14H13.5V5" class="ic" style="stroke:#c4c4c4;stroke-width:1.3"/><path d="M6 8H10" class="ic" style="stroke:#c4c4c4;stroke-width:1.3"/></svg>
<svg style="left:1596px;top:486.5px" width="16" height="16" viewBox="0 0 16 16"><rect x="4" y="4" width="8" height="8" fill="#e39a4e"/><path d="M1.5 4.5V1.5H4.5 M11.5 1.5H14.5V4.5 M14.5 11.5V14.5H11.5 M4.5 14.5H1.5V11.5" fill="none" stroke="#e39a4e" stroke-width="1.2" opacity=".8"/></svg>
<div class="a" style="left:1591.5px;top:510.5px;width:26.5px;height:25.5px;background:#303030;border-radius:4px 0 0 4px;"></div>
<svg style="left:1596px;top:515px" width="16" height="16" viewBox="0 0 16 16"><path d="M11 1C8.5 1 6.5 3.5 7.5 6.5L1.5 12.5C0.5 13.5 2.5 15.5 3.5 14.5L9.5 8.5C12.5 9.5 15 7.5 15 5L12.5 7.5L9.8 6.2L8.5 3.5Z" fill="#6d9bea"/></svg>
<svg style="left:1596px;top:543px" width="16" height="16" viewBox="0 0 16 16"><circle cx="3" cy="3" r="1.8" fill="#5b8de0"/><circle cx="3" cy="13" r="1.8" fill="#5b8de0"/><circle cx="13" cy="8.5" r="1.8" fill="#5b8de0"/><path d="M3 3V13 M3 4L13 8.5 M3 12L8 5" stroke="#5b8de0" stroke-width="1.1" fill="none"/></svg>
<svg style="left:1596px;top:570.5px" width="16" height="16" viewBox="0 0 16 16"><circle cx="8" cy="8.5" r="6" fill="none" stroke="#5b8de0" stroke-width="1.6"/><circle cx="8" cy="8.5" r="2.2" fill="#5b8de0"/><circle cx="13" cy="3" r="1.6" fill="#5b8de0"/></svg>
<svg style="left:1596px;top:598.5px" width="16" height="16" viewBox="0 0 16 16"><ellipse cx="7" cy="9" rx="5.5" ry="4.2" transform="rotate(-30 7 9)" fill="none" stroke="#5b8de0" stroke-width="1.6"/><circle cx="6.5" cy="9.5" r="1.7" fill="#5b8de0"/><path d="M10.5 4.5L14.5 1.5" stroke="#5b8de0" stroke-width="2"/></svg>
<svg style="left:1596px;top:626px" width="16" height="16" viewBox="0 0 16 16"><path d="M3 3H13L8 13.5Z" fill="none" stroke="#2ec08a" stroke-width="1.3"/><rect x="1.2" y="1.2" width="3.6" height="3.6" fill="#1b1b1b" stroke="#2ec08a" stroke-width="1.2"/><rect x="11.2" y="1.2" width="3.6" height="3.6" fill="#1b1b1b" stroke="#2ec08a" stroke-width="1.2"/><rect x="6.2" y="11.4" width="3.6" height="3.6" fill="#1b1b1b" stroke="#2ec08a" stroke-width="1.2"/></svg>
<svg style="left:1596px;top:655px" width="16" height="16" viewBox="0 0 16 16"><circle cx="8" cy="8" r="6.5" fill="#e0646e"/><path d="M8 8V1.5A6.5 6.5 0 0 0 1.5 8Z" fill="#1b1b1b"/><path d="M8 8H14.5A6.5 6.5 0 0 1 8 14.5Z" fill="#1b1b1b" opacity=".55"/></svg>
<svg style="left:1599px;top:690.5px" width="10" height="8"><path d="M1.5 2L5 5.5L8.5 2" class="ic" style="stroke:#4e4e4e;stroke-width:1.1"/></svg>
<svg style="left:1627px;top:263px" width="16" height="16" viewBox="0 0 16 16"><rect x="4.5" y="4.5" width="7" height="7" fill="#e6e6e6"/><path d="M1.5 4.5V1.5H4.5 M11.5 1.5H14.5V4.5 M14.5 11.5V14.5H11.5 M4.5 14.5H1.5V11.5" class="ic"/></svg>
<span class="t " style="left:1651px;top:271px;">jacket</span>
<svg style="left:1698px;top:266px" width="8" height="10"><path d="M2 1.5L5.5 5L2 8.5" class="ic" style="stroke:#c8c8c8;stroke-width:1.1"/></svg>
<svg style="left:1714px;top:263px" width="16" height="16" viewBox="0 0 16 16"><path d="M1.5 5.5H10.5V14.5H1.5Z M1.5 5.5L5 1.5H14.5V10.5L10.5 14.5 M10.5 5.5L14.5 1.5" class="ic"/></svg>
<span class="t " style="left:1738.3px;top:271px;">Solidify</span>
<svg style="left:1892px;top:263px" width="16" height="16" viewBox="0 0 16 16"><path d="M9.5 1.5L14.5 6.5L13 7L10.5 9.5L10 12.5L3.5 6L6.5 5.5L9 3Z M6.7 9.3L1.5 14.5" fill="none" stroke="#9a9a9a" stroke-width="1" stroke-linejoin="round" stroke-linecap="round"/></svg>
<div class="a" style="left:1626px;top:298.5px;width:140px;height:17.5px;background:#545454;border-radius:4px 0 0 0;"></div>
<div class="a" style="left:1766.8px;top:298.5px;width:141.6px;height:17.5px;background:#545454;border-radius:0 4px 0 0;"></div>
<div class="a" style="left:1626px;top:317px;width:140px;height:18.5px;background:#545454;border-radius:0 0 0 4px;"></div>
<div class="a" style="left:1766.8px;top:317px;width:141.6px;height:18.5px;background:#545454;border-radius:0 0 4px 0;"></div>
<svg style="left:1630px;top:300px" width="14" height="15" viewBox="0 0 14 15"><path d="M7 1.5V10 M3.5 6.5L7 10L10.5 6.5 M1.5 10V13.5H12.5V10" class="ic"/></svg>
<span class="t tc" style="left:1704.5px;top:307.5px;">Apply All</span>
<svg style="left:1773px;top:303px" width="10" height="10" viewBox="0 0 10 10"><path d="M1.5 1.5L8.5 8.5M8.5 1.5L1.5 8.5" class="ic"/></svg>
<span class="t tc" style="left:1846.4px;top:307.5px;">Delete All</span>
<svg style="left:1630px;top:319px" width="14" height="14" viewBox="0 0 14 14"><rect x="1.5" y="1.5" width="11" height="8" rx="1" class="ic"/><path d="M4 12.5H10 M7 9.5V12.5" class="ic"/><rect x="3.2" y="3.2" width="7.6" height="4.6" fill="#e6e6e6"/></svg>
<span class="t tc" style="left:1704.5px;top:326.5px;">Viewport Vis</span>
<svg style="left:1770.5px;top:318.5px" width="15" height="15" viewBox="0 0 15 15"><path d="M1.5 5.5V1.5H5.5 M9.5 13.5H13.5V9.5" class="ic" style="stroke-dasharray:2 1.5"/><path d="M9 1.5H13.5V6 M13.5 1.5L8.5 6.5 M6 13.5H1.5V9 M1.5 13.5L6.5 8.5" class="ic"/></svg>
<span class="t tc" style="left:1845.5px;top:326.5px;">Toggle Stack</span>
<div class="a" style="left:1626px;top:343.5px;width:282.4px;height:18px;background:#545454;border-radius:4px;"></div>
<svg style="left:1632.5px;top:347.5px" width="10" height="10" viewBox="0 0 10 10"><path d="M5 0.5V9.5M0.5 5H9.5" class="ic"/></svg>
<span class="t tc" style="left:1775.4px;top:352.5px;">Add Modifier</span>
<div class="a" style="left:1625.5px;top:372.5px;width:283px;height:225.5px;background:#3d3d3d;border-radius:4px;"></div>
<svg style="left:1633px;top:381px" width="10" height="8"><path d="M1.5 2L5 5.5L8.5 2" class="ic" style="stroke:#c8c8c8;stroke-width:1.1"/></svg>
<svg style="left:1647px;top:377px" width="16" height="16" viewBox="0 0 16 16"><path d="M6.5 4C4.5 0.5 0.8 2 2 5.5C3 8 5 8 3.5 10C1.5 12.5 3.5 16 6.5 13" class="ic" style="stroke:#d9d9d9"/><path d="M9.5 4C11.5 0.5 15.2 2 14 5.5C13 8 11 8 12.5 10C14.5 12.5 12.5 16 9.5 13" class="ic" style="stroke:#d9d9d9"/><path d="M8 0.5V15.5" stroke="#f2f2f2" stroke-width="1.1" stroke-dasharray="2 1.3"/></svg>
<div class="a" style="left:1674.4px;top:376px;width:84px;height:18px;background:#1d1d1d;border-radius:4px 0 0 4px;"></div>
<span class="t " style="left:1681px;top:385px;">Mirror</span>
<div class="a" style="left:1758.8px;top:376px;width:20px;height:18px;background:#545454;border-radius:0;"></div>
<div class="a" style="left:1779.3px;top:376px;width:19.7px;height:18px;background:#4772b3;border-radius:0;"></div>
<div class="a" style="left:1799.5px;top:376px;width:19.7px;height:18px;background:#4772b3;border-radius:0;"></div>
<div class="a" style="left:1819.7px;top:376px;width:19px;height:18px;background:#4772b3;border-radius:0;"></div>
<div class="a" style="left:1839px;top:376px;width:19.5px;height:18px;background:#1d1d1d;border-radius:0 4px 4px 0;"></div>
<svg style="left:1760.8px;top:377px" width="16" height="16" viewBox="0 0 16 16"><path d="M3 3H13L8 13.5Z" fill="none" stroke="#e6e6e6" stroke-width="1.2"/><rect x="1.2" y="1.2" width="3.4" height="3.4" fill="#545454" stroke="#e6e6e6" stroke-width="1.1"/><rect x="11.4" y="1.2" width="3.4" height="3.4" fill="#545454" stroke="#e6e6e6" stroke-width="1.1"/><rect x="6.3" y="11.6" width="3.4" height="3.4" fill="#545454" stroke="#e6e6e6" stroke-width="1.1"/></svg>
<svg style="left:1781px;top:377px" width="16" height="16" viewBox="0 0 16 16"><path d="M4 3.5H10 M3 5V11.5 M4.5 13H11 M12.5 11.5V7.5" class="ic" style="stroke:#fff"/><rect x="1.5" y="2" width="3" height="3" class="ic" style="stroke:#fff;stroke-width:0.9"/><rect x="1.5" y="11.5" width="3" height="3" class="ic" style="stroke:#fff;stroke-width:0.9"/><rect x="11" y="11.5" width="3" height="3" class="ic" style="stroke:#fff;stroke-width:0.9"/><rect x="10.3" y="1" width="4.7" height="4.7" fill="#fff"/></svg>
<svg style="left:1801.5px;top:377px" width="16" height="16" viewBox="0 0 16 16"><rect x="1.5" y="2.5" width="13" height="9" rx="1" class="ic" style="stroke:#fff"/><path d="M5 14.5H11 M8 11.5V14.5" class="ic" style="stroke:#fff"/><rect x="3.3" y="4.3" width="9.4" height="5.4" fill="#fff"/></svg>
<svg style="left:1821.3px;top:377px" width="16" height="16" viewBox="0 0 16 16"><path d="M1 4H4.5L5.5 2H10.5L11.5 4H15V14H1Z" fill="#fff"/><circle cx="8" cy="8.8" r="3.5" fill="#4772b3"/><circle cx="8" cy="8.8" r="2" fill="none" stroke="#fff" stroke-width="1.1"/></svg>
<svg style="left:1843.8px;top:381px" width="10" height="8"><path d="M1.5 2L5 5.5L8.5 2" class="ic" style="stroke:#e6e6e6;stroke-width:1.1"/></svg>
<svg style="left:1864px;top:380px" width="10" height="10" viewBox="0 0 10 10"><path d="M1 1L9 9M9 1L1 9" class="ic"/></svg>
<svg style="left:1888px;top:382px" width="12" height="6" viewBox="0 0 12 6"><rect x="0" y="0.5" width="1.2" height="1.2" fill="#7a7a7a"/><rect x="0" y="3.5" width="1.2" height="1.2" fill="#7a7a7a"/><rect x="3" y="0.5" width="1.2" height="1.2" fill="#7a7a7a"/><rect x="3" y="3.5" width="1.2" height="1.2" fill="#7a7a7a"/><rect x="6" y="0.5" width="1.2" height="1.2" fill="#7a7a7a"/><rect x="6" y="3.5" width="1.2" height="1.2" fill="#7a7a7a"/><rect x="9" y="0.5" width="1.2" height="1.2" fill="#7a7a7a"/><rect x="9" y="3.5" width="1.2" height="1.2" fill="#7a7a7a"/></svg>
<span class="t tr" style="left:1727px;top:415px;">Axis</span>
<div class="a" style="left:1738px;top:406px;width:46px;height:18px;background:#4772b3;border-radius:4px 0 0 4px;"></div>
<span class="t tc" style="left:1761px;top:415px;color:#fff">X</span>
<div class="a" style="left:1784.5px;top:406px;width:47.5px;height:18px;background:#545454;border-radius:0;"></div>
<span class="t tc" style="left:1808.25px;top:415px;">Y</span>
<div class="a" style="left:1832.5px;top:406px;width:47.3px;height:18px;background:#545454;border-radius:0 4px 4px 0;"></div>
<span class="t tc" style="left:1856.15px;top:415px;">Z</span>
<span class="t tr" style="left:1727px;top:437px;">Bisect</span>
<div class="a" style="left:1738px;top:428px;width:46px;height:18px;background:#545454;border-radius:4px 0 0 4px;"></div>
<span class="t tc" style="left:1761px;top:437px;">X</span>
<div class="a" style="left:1784.5px;top:428px;width:47.5px;height:18px;background:#545454;border-radius:0;"></div>
<span class="t tc" style="left:1808.25px;top:437px;">Y</span>
<div class="a" style="left:1832.5px;top:428px;width:47.3px;height:18px;background:#545454;border-radius:0 4px 4px 0;"></div>
<span class="t tc" style="left:1856.15px;top:437px;">Z</span>
<span class="t tr dim2" style="left:1727px;top:459.3px;">Flip</span>
<div class="a" style="left:1738px;top:450.3px;width:46px;height:18px;background:#484848;border-radius:4px 0 0 4px;"></div>
<span class="t tc dim2" style="left:1761px;top:459.3px;">X</span>
<div class="a" style="left:1784.5px;top:450.3px;width:47.5px;height:18px;background:#484848;border-radius:0;"></div>
<span class="t tc dim2" style="left:1808.25px;top:459.3px;">Y</span>
<div class="a" style="left:1832.5px;top:450.3px;width:47.3px;height:18px;background:#484848;border-radius:0 4px 4px 0;"></div>
<span class="t tc dim2" style="left:1856.15px;top:459.3px;">Z</span>
<span class="t tr" style="left:1727px;top:489px;">Mirror Object</span>
<div class="a" style="left:1738px;top:480px;width:141.8px;height:18px;background:#1d1d1d;border-radius:4px;"></div>
<svg style="left:1741px;top:481px" width="16" height="16" viewBox="0 0 16 16"><rect x="4.5" y="4.5" width="7" height="7" fill="#e6e6e6"/><path d="M1.5 4.5V1.5H4.5 M11.5 1.5H14.5V4.5 M14.5 11.5V14.5H11.5 M4.5 14.5H1.5V11.5" class="ic"/></svg>
<span class="t dim2" style="left:1763px;top:489px;">Object</span>
<svg style="left:1861px;top:481px" width="16" height="16" viewBox="0 0 16 16"><path d="M9.5 6.5L3 13L2 14.5L3.5 13.5L10 7" class="ic" style="stroke-width:1.3"/><path d="M9 4L12.5 7.5 M10 5L12 2.5C13 1.5 15 3.5 14 4.5L11.5 6.5Z" fill="#e6e6e6" stroke="#e6e6e6" stroke-width="1.1"/></svg>
<div class="a" style="left:1738px;top:505.3px;width:12px;height:12px;background:#545454;border-radius:3px;"></div>
<span class="t " style="left:1754.4px;top:511.3px;">Clipping</span>
<svg style="left:1889px;top:509.3px" width="4" height="4" viewBox="0 0 4 4"><circle cx="2" cy="2" r="1.6" fill="#e6e6e6"/></svg>
<span class="t tr" style="left:1727px;top:533.2px;">Merge</span>
<div class="a" style="left:1738px;top:527.2px;width:12px;height:12px;background:#4772b3;border-radius:3px;"></div>
<svg style="left:1738px;top:527.2px" width="12" height="12" viewBox="0 0 12 12"><path d="M2.8 6.2L5 8.5L9.3 3.3" fill="none" stroke="#fff" stroke-width="1.5" stroke-linecap="round" stroke-linejoin="round"/></svg>
<div class="a" style="left:1758.2px;top:524.2px;width:121.6px;height:18px;background:#545454;border-radius:4px;"></div>
<span class="t tc n" style="left:1819px;top:533.2px;">0.001 m</span>
<svg style="left:1889px;top:531.2px" width="4" height="4" viewBox="0 0 4 4"><circle cx="2" cy="2" r="1.6" fill="#e6e6e6"/></svg>
<span class="t tr dim2" style="left:1727px;top:555.2px;">Bisect Distance</span>
<div class="a" style="left:1738px;top:546.2px;width:141.8px;height:18px;background:#484848;border-radius:4px;"></div>
<span class="t tc n dim2" style="left:1808.9px;top:555.2px;">0.001 m</span>
<svg style="left:1889px;top:553.2px" width="4" height="4" viewBox="0 0 4 4"><circle cx="2" cy="2" r="1.6" fill="#555"/></svg>
<svg style="left:1648px;top:580.8px" width="8" height="10"><path d="M2 1.5L5.5 5L2 8.5" class="ic" style="stroke:#c8c8c8;stroke-width:1.1"/></svg>
<span class="t " style="left:1661.3px;top:585.8px;">Data</span>
<div class="a" style="left:1625.5px;top:600.5px;width:283px;height:368px;background:#3d3d3d;border-radius:4px;border:1px solid #4772b3"></div>
<svg style="left:1633px;top:609.2px" width="10" height="8"><path d="M1.5 2L5 5.5L8.5 2" class="ic" style="stroke:#c8c8c8;stroke-width:1.1"/></svg>
<svg style="left:1647px;top:605.2px" width="16" height="16" viewBox="0 0 16 16"><path d="M1.5 5.5H10.5V14.5H1.5Z M1.5 5.5L5 1.5H14.5V10.5L10.5 14.5 M10.5 5.5L14.5 1.5" class="ic"/></svg>
<div class="a" style="left:1674.4px;top:604.2px;width:84px;height:18px;background:#1d1d1d;border-radius:4px 0 0 4px;"></div>
<span class="t " style="left:1681px;top:613.2px;">Solidify</span>
<div class="a" style="left:1758.8px;top:604.2px;width:20px;height:18px;background:#545454;border-radius:0;"></div>
<div class="a" style="left:1779.3px;top:604.2px;width:19.7px;height:18px;background:#4772b3;border-radius:0;"></div>
<div class="a" style="left:1799.5px;top:604.2px;width:19.7px;height:18px;background:#4772b3;border-radius:0;"></div>
<div class="a" style="left:1819.7px;top:604.2px;width:19px;height:18px;background:#4772b3;border-radius:0;"></div>
<div class="a" style="left:1839px;top:604.2px;width:19.5px;height:18px;background:#1d1d1d;border-radius:0 4px 4px 0;"></div>
<svg style="left:1760.8px;top:605.2px" width="16" height="16" viewBox="0 0 16 16"><path d="M3 3H13L8 13.5Z" fill="none" stroke="#e6e6e6" stroke-width="1.2"/><rect x="1.2" y="1.2" width="3.4" height="3.4" fill="#545454" stroke="#e6e6e6" stroke-width="1.1"/><rect x="11.4" y="1.2" width="3.4" height="3.4" fill="#545454" stroke="#e6e6e6" stroke-width="1.1"/><rect x="6.3" y="11.6" width="3.4" height="3.4" fill="#545454" stroke="#e6e6e6" stroke-width="1.1"/></svg>
<svg style="left:1781px;top:605.2px" width="16" height="16" viewBox="0 0 16 16"><path d="M4 3.5H10 M3 5V11.5 M4.5 13H11 M12.5 11.5V7.5" class="ic" style="stroke:#fff"/><rect x="1.5" y="2" width="3" height="3" class="ic" style="stroke:#fff;stroke-width:0.9"/><rect x="1.5" y="11.5" width="3" height="3" class="ic" style="stroke:#fff;stroke-width:0.9"/><rect x="11" y="11.5" width="3" height="3" class="ic" style="stroke:#fff;stroke-width:0.9"/><rect x="10.3" y="1" width="4.7" height="4.7" fill="#fff"/></svg>
<svg style="left:1801.5px;top:605.2px" width="16" height="16" viewBox="0 0 16 16"><rect x="1.5" y="2.5" width="13" height="9" rx="1" class="ic" style="stroke:#fff"/><path d="M5 14.5H11 M8 11.5V14.5" class="ic" style="stroke:#fff"/><rect x="3.3" y="4.3" width="9.4" height="5.4" fill="#fff"/></svg>
<svg style="left:1821.3px;top:605.2px" width="16" height="16" viewBox="0 0 16 16"><path d="M1 4H4.5L5.5 2H10.5L11.5 4H15V14H1Z" fill="#fff"/><circle cx="8" cy="8.8" r="3.5" fill="#4772b3"/><circle cx="8" cy="8.8" r="2" fill="none" stroke="#fff" stroke-width="1.1"/></svg>
<svg style="left:1843.8px;top:609.2px" width="10" height="8"><path d="M1.5 2L5 5.5L8.5 2" class="ic" style="stroke:#e6e6e6;stroke-width:1.1"/></svg>
<svg style="left:1864px;top:608.2px" width="10" height="10" viewBox="0 0 10 10"><path d="M1 1L9 9M9 1L1 9" class="ic"/></svg>
<svg style="left:1888px;top:610.2px" width="12" height="6" viewBox="0 0 12 6"><rect x="0" y="0.5" width="1.2" height="1.2" fill="#7a7a7a"/><rect x="0" y="3.5" width="1.2" height="1.2" fill="#7a7a7a"/><rect x="3" y="0.5" width="1.2" height="1.2" fill="#7a7a7a"/><rect x="3" y="3.5" width="1.2" height="1.2" fill="#7a7a7a"/><rect x="6" y="0.5" width="1.2" height="1.2" fill="#7a7a7a"/><rect x="6" y="3.5" width="1.2" height="1.2" fill="#7a7a7a"/><rect x="9" y="0.5" width="1.2" height="1.2" fill="#7a7a7a"/><rect x="9" y="3.5" width="1.2" height="1.2" fill="#7a7a7a"/></svg>
<span class="t tr" style="left:1727px;top:643px;">Mode</span>
<div class="a" style="left:1738px;top:634px;width:141.8px;height:18px;background:#1d1d1d;border-radius:4px;"></div>
<span class="t " style="left:1745px;top:643px;">Simple</span>
<svg style="left:1867.5px;top:639.5px" width="10" height="8"><path d="M1.5 2L5 5.5L8.5 2" class="ic" style="stroke:#e6e6e6;stroke-width:1.1"/></svg>
<svg style="left:1889px;top:641px" width="4" height="4" viewBox="0 0 4 4"><circle cx="2" cy="2" r="1.6" fill="#e6e6e6"/></svg>
<span class="t tr" style="left:1727px;top:668.2px;">Thickness</span>
<div class="a" style="left:1738px;top:659.2px;width:141.8px;height:18px;background:#545454;border-radius:4px;"></div>
<span class="t tc n" style="left:1808.9px;top:668.2px;">0.005 m</span>
<svg style="left:1889px;top:666.2px" width="4" height="4" viewBox="0 0 4 4"><circle cx="2" cy="2" r="1.6" fill="#e6e6e6"/></svg>
<span class="t tr" style="left:1727px;top:693px;">Offset</span>
<div class="a" style="left:1738px;top:684px;width:141.8px;height:18px;background:#545454;border-radius:4px;"></div>
<span class="t tc n" style="left:1808.9px;top:693px;letter-spacing:.6px">-1.0000</span>
<svg style="left:1889px;top:691px" width="4" height="4" viewBox="0 0 4 4"><circle cx="2" cy="2" r="1.6" fill="#e6e6e6"/></svg>
<div class="a" style="left:1738px;top:712.2px;width:12px;height:12px;background:#4772b3;border-radius:3px;"></div>
<svg style="left:1738px;top:712.2px" width="12" height="12" viewBox="0 0 12 12"><path d="M2.8 6.2L5 8.5L9.3 3.3" fill="none" stroke="#fff" stroke-width="1.5" stroke-linecap="round" stroke-linejoin="round"/></svg>
<span class="t " style="left:1754.4px;top:718.2px;">Even Thickness</span>
<svg style="left:1889px;top:716.2px" width="4" height="4" viewBox="0 0 4 4"><circle cx="2" cy="2" r="1.6" fill="#e6e6e6"/></svg>
<span class="t tr" style="left:1727px;top:743px;">Rim</span>
<div class="a" style="left:1738px;top:737px;width:12px;height:12px;background:#4772b3;border-radius:3px;"></div>
<svg style="left:1738px;top:737px" width="12" height="12" viewBox="0 0 12 12"><path d="M2.8 6.2L5 8.5L9.3 3.3" fill="none" stroke="#fff" stroke-width="1.5" stroke-linecap="round" stroke-linejoin="round"/></svg>
<span class="t " style="left:1754.4px;top:743px;">Fill</span>
<svg style="left:1889px;top:741px" width="4" height="4" viewBox="0 0 4 4"><circle cx="2" cy="2" r="1.6" fill="#e6e6e6"/></svg>
<div class="a" style="left:1738px;top:759px;width:12px;height:12px;background:#545454;border-radius:3px;"></div>
<span class="t " style="left:1754.4px;top:765px;">Only Rim</span>
<svg style="left:1889px;top:763px" width="4" height="4" viewBox="0 0 4 4"><circle cx="2" cy="2" r="1.6" fill="#e6e6e6"/></svg>
<span class="t tr" style="left:1727px;top:801px;">Vertex Group</span>
<div class="a" style="left:1738px;top:792px;width:122px;height:18px;background:#1d1d1d;border-radius:4px 0 0 4px;"></div>
<div class="a" style="left:1860.5px;top:792px;width:19.3px;height:18px;background:#545454;border-radius:0 4px 4px 0;"></div>
<svg style="left:1741px;top:795px" width="14" height="12" viewBox="0 0 14 12"><rect x="0.5" y="4.5" width="3.2" height="3.2" fill="#e6e6e6" stroke="#e6e6e6" stroke-width="0.7"/><rect x="4.5" y="0.5" width="3.2" height="3.2" fill="#e6e6e6" stroke="#e6e6e6" stroke-width="0.7"/><rect x="4.5" y="4.5" width="3.2" height="3.2" fill="#e6e6e6" stroke="#e6e6e6" stroke-width="0.7"/><rect x="4.5" y="8.5" width="3.2" height="3.2" fill="#e6e6e6" stroke="#e6e6e6" stroke-width="0.7"/><rect x="8.5" y="0.5" width="3.2" height="3.2" fill="#1d1d1d" stroke="#e6e6e6" stroke-width="0.7"/><rect x="8.5" y="4.5" width="3.2" height="3.2" fill="#e6e6e6" stroke="#e6e6e6" stroke-width="0.7"/><rect x="8.5" y="8.5" width="3.2" height="3.2" fill="#1d1d1d" stroke="#e6e6e6" stroke-width="0.7"/><rect x="0.5" y="8.5" width="3.2" height="3.2" fill="#e6e6e6" stroke="#e6e6e6" stroke-width="0.7"/></svg>
<svg style="left:1863px;top:796px" width="14" height="10" viewBox="0 0 14 10"><path d="M1.5 5H12.5 M4 2.5L1.5 5L4 7.5 M10 2.5L12.5 5L10 7.5" class="ic" style="stroke:#7c7c7c"/></svg>
<span class="t tr dim2" style="left:1727px;top:826px;">Factor</span>
<div class="a" style="left:1738px;top:817px;width:141.8px;height:18px;background:#484848;border-radius:4px;"></div>
<span class="t tc n dim2" style="left:1808.9px;top:826px;">0.000</span>
<svg style="left:1889px;top:824px" width="4" height="4" viewBox="0 0 4 4"><circle cx="2" cy="2" r="1.6" fill="#555"/></svg>
<svg style="left:1648px;top:852px" width="8" height="10"><path d="M2 1.5L5.5 5L2 8.5" class="ic" style="stroke:#c8c8c8;stroke-width:1.1"/></svg>
<span class="t " style="left:1661.3px;top:857px;">Normals</span>
<svg style="left:1648px;top:877px" width="8" height="10"><path d="M2 1.5L5.5 5L2 8.5" class="ic" style="stroke:#c8c8c8;stroke-width:1.1"/></svg>
<span class="t " style="left:1661.3px;top:882px;">Materials</span>
<svg style="left:1648px;top:902px" width="8" height="10"><path d="M2 1.5L5.5 5L2 8.5" class="ic" style="stroke:#c8c8c8;stroke-width:1.1"/></svg>
<span class="t " style="left:1661.3px;top:907px;">Edge Data</span>
<svg style="left:1648px;top:927px" width="8" height="10"><path d="M2 1.5L5.5 5L2 8.5" class="ic" style="stroke:#c8c8c8;stroke-width:1.1"/></svg>
<span class="t " style="left:1661.3px;top:932px;">Thickness Clamp</span>
<svg style="left:1648px;top:952px" width="8" height="10"><path d="M2 1.5L5.5 5L2 8.5" class="ic" style="stroke:#c8c8c8;stroke-width:1.1"/></svg>
<span class="t " style="left:1661.3px;top:957px;">Output Vertex Groups</span>
<svg style="left:1830px;top:1036px" width="62" height="120" viewBox="0 0 62 120"><defs><linearGradient id="gFire" x1="0" y1="0" x2="0" y2="1"><stop offset="0" stop-color="#b8a020"/><stop offset="0.45" stop-color="#c07a1c"/><stop offset="1" stop-color="#b02a1c"/></linearGradient></defs><text x="31" y="50" text-anchor="middle" font-family="'Noto Serif CJK SC','Noto Serif CJK JP','Noto Sans CJK JP',serif" font-size="54" font-weight="500" fill="#23267a">氷</text><text x="31" y="108" text-anchor="middle" font-family="'Noto Serif CJK SC','Noto Serif CJK JP','Noto Sans CJK JP',serif" font-size="54" font-weight="500" fill="url(#gFire)">火</text></svg>
<!-- ===== STATUS BAR ===== -->
<svg style="left:5.5px;top:1158px" width="13" height="17" viewBox="0 0 13 17"><rect x="1" y="1" width="10.5" height="14.5" rx="3.5" fill="none" stroke="#b0b0b0" stroke-width="1.1"/><path d="M1.5 3.5A3 3 0 0 1 4.5 1.5H6V8H1.5Z" fill="#b0b0b0"/></svg>
<span class="t " style="left:20.5px;top:1166px;color:#a8a8a8">Select</span>
<svg style="left:62.5px;top:1158px" width="13" height="17" viewBox="0 0 13 17"><rect x="1" y="1" width="10.5" height="14.5" rx="3.5" fill="none" stroke="#b0b0b0" stroke-width="1.1"/><rect x="4.5" y="2.5" width="3.5" height="6" rx="1" fill="#b0b0b0"/></svg>
<span class="t " style="left:77.5px;top:1166px;color:#a8a8a8">Rotate View</span>
<svg style="left:148.5px;top:1158px" width="13" height="17" viewBox="0 0 13 17"><rect x="1" y="1" width="10.5" height="14.5" rx="3.5" fill="none" stroke="#b0b0b0" stroke-width="1.1"/><path d="M11 3.5A3 3 0 0 0 8 1.5H6.5V8H11Z" fill="#b0b0b0"/></svg>
<span class="t " style="left:163.5px;top:1166px;color:#a8a8a8">Options</span>
<span class="t tr" style="left:1907px;top:1166px;color:#a8a8a8;font-size:12.05px">jacket | Verts:1/291 | Edges:0/538 | Faces:0/248 | Tris:495 | Objects:1/14 | Memory: 116.4 MiB | VRAM: 4.9/12.0 GiB | 5.0.1</span>
</div><!--root-->
</body>
</html>
